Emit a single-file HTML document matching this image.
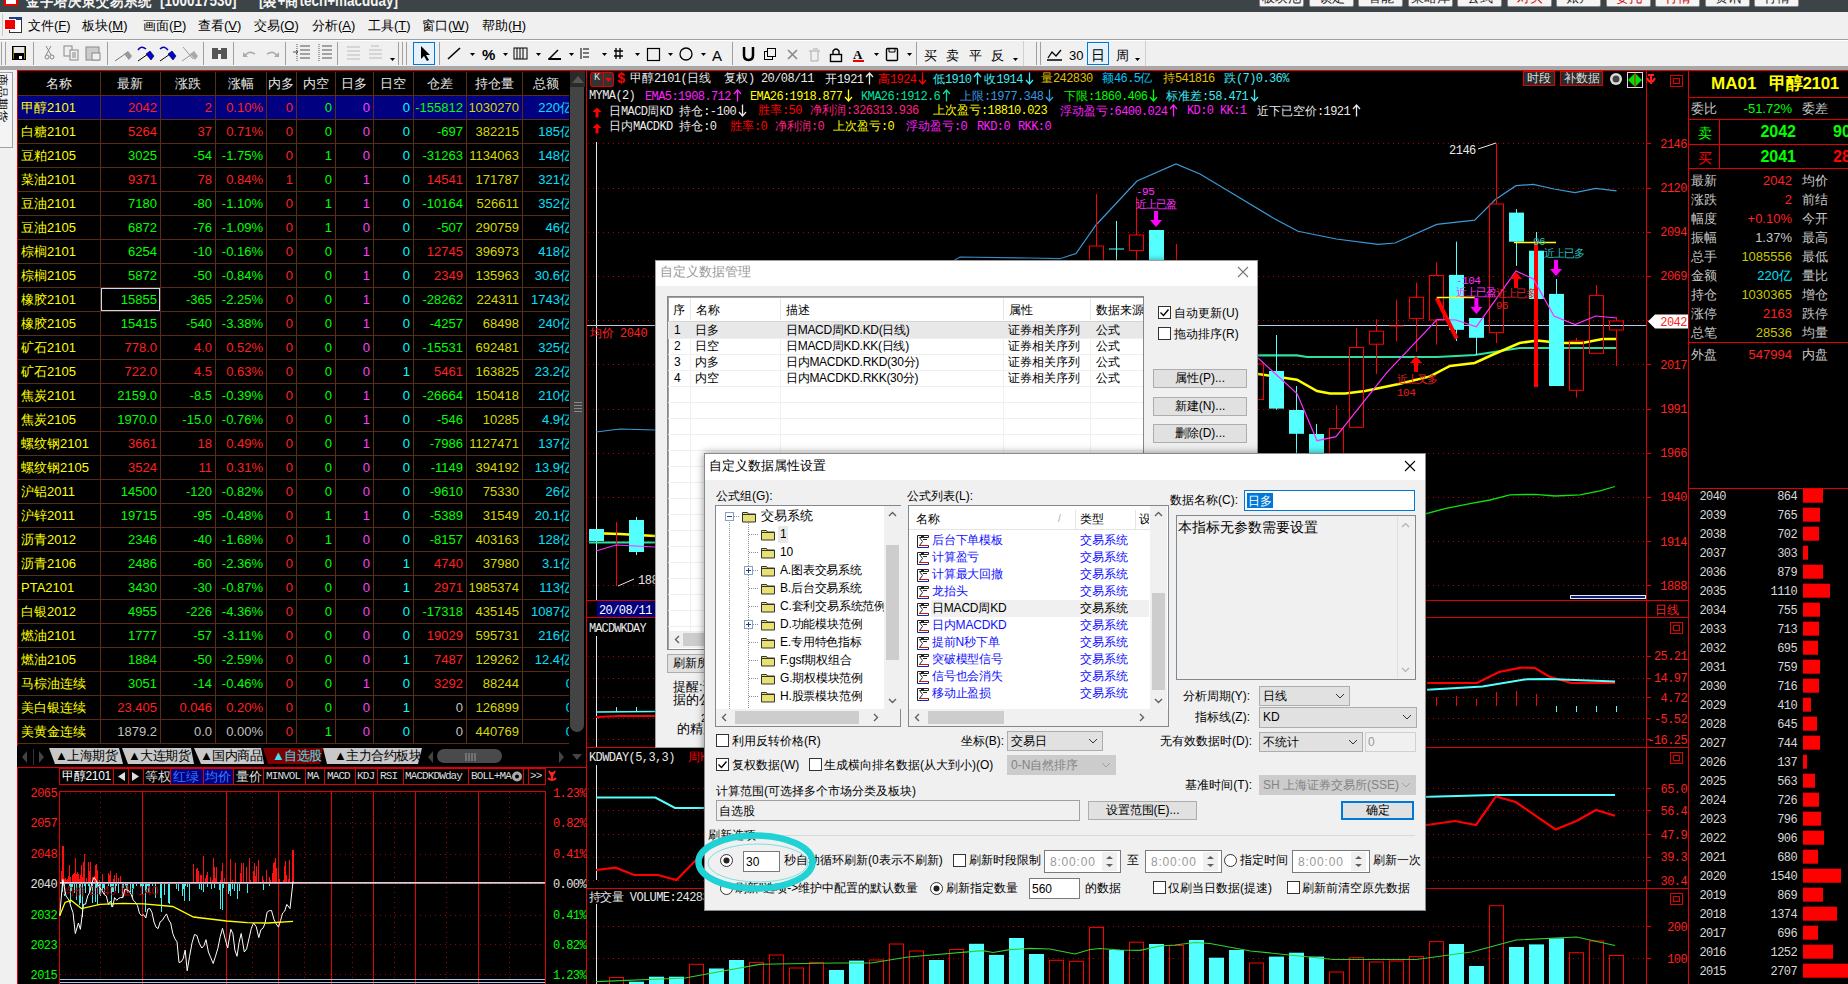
<!DOCTYPE html><html><head><meta charset="utf-8"><style>
*{margin:0;padding:0;box-sizing:border-box}
html,body{width:1848px;height:984px;overflow:hidden;background:#000;font-family:"Liberation Sans",sans-serif;font-size:13px}
.a{position:absolute}
.m{font-family:"Liberation Mono",monospace}
.nw{white-space:nowrap}
</style></head><body>
<div class="a" style="left:15px;top:68px;width:574px;height:700px;background:#000"></div>
<div class="a" style="left:17px;top:70px;width:570px;height:676px;border:1px solid #d00000;border-bottom:none;border-right:none"></div>
<div class="a" style="left:15px;top:68px;width:2px;height:700px;background:#9a9a9a"></div>
<div class="a" style="left:15px;top:68px;width:572px;height:2px;background:#9a9a9a"></div>
<div class="a" style="left:18px;top:71px;width:551px;height:675px;overflow:hidden">
<div class="a" style="left:0;top:25px;width:551px;height:23px;background:#000080"></div>
<div class="a" style="left:82px;top:1px;width:1px;height:672px;background:#5a2e14"></div>
<div class="a" style="left:142px;top:1px;width:1px;height:672px;background:#5a2e14"></div>
<div class="a" style="left:197px;top:1px;width:1px;height:672px;background:#5a2e14"></div>
<div class="a" style="left:248px;top:1px;width:1px;height:672px;background:#5a2e14"></div>
<div class="a" style="left:278px;top:1px;width:1px;height:672px;background:#5a2e14"></div>
<div class="a" style="left:317px;top:1px;width:1px;height:672px;background:#5a2e14"></div>
<div class="a" style="left:355px;top:1px;width:1px;height:672px;background:#5a2e14"></div>
<div class="a" style="left:395px;top:1px;width:1px;height:672px;background:#5a2e14"></div>
<div class="a" style="left:448px;top:1px;width:1px;height:672px;background:#5a2e14"></div>
<div class="a" style="left:504px;top:1px;width:1px;height:672px;background:#5a2e14"></div>
<div class="a" style="left:0;top:24px;width:551px;height:1px;background:#5a2e14"></div>
<div class="a" style="left:0;top:48px;width:551px;height:1px;background:#5a2e14"></div>
<div class="a" style="left:0;top:72px;width:551px;height:1px;background:#5a2e14"></div>
<div class="a" style="left:0;top:96px;width:551px;height:1px;background:#5a2e14"></div>
<div class="a" style="left:0;top:120px;width:551px;height:1px;background:#5a2e14"></div>
<div class="a" style="left:0;top:144px;width:551px;height:1px;background:#5a2e14"></div>
<div class="a" style="left:0;top:168px;width:551px;height:1px;background:#5a2e14"></div>
<div class="a" style="left:0;top:192px;width:551px;height:1px;background:#5a2e14"></div>
<div class="a" style="left:0;top:216px;width:551px;height:1px;background:#5a2e14"></div>
<div class="a" style="left:0;top:240px;width:551px;height:1px;background:#5a2e14"></div>
<div class="a" style="left:0;top:264px;width:551px;height:1px;background:#5a2e14"></div>
<div class="a" style="left:0;top:288px;width:551px;height:1px;background:#5a2e14"></div>
<div class="a" style="left:0;top:312px;width:551px;height:1px;background:#5a2e14"></div>
<div class="a" style="left:0;top:336px;width:551px;height:1px;background:#5a2e14"></div>
<div class="a" style="left:0;top:360px;width:551px;height:1px;background:#5a2e14"></div>
<div class="a" style="left:0;top:384px;width:551px;height:1px;background:#5a2e14"></div>
<div class="a" style="left:0;top:408px;width:551px;height:1px;background:#5a2e14"></div>
<div class="a" style="left:0;top:432px;width:551px;height:1px;background:#5a2e14"></div>
<div class="a" style="left:0;top:456px;width:551px;height:1px;background:#5a2e14"></div>
<div class="a" style="left:0;top:480px;width:551px;height:1px;background:#5a2e14"></div>
<div class="a" style="left:0;top:504px;width:551px;height:1px;background:#5a2e14"></div>
<div class="a" style="left:0;top:528px;width:551px;height:1px;background:#5a2e14"></div>
<div class="a" style="left:0;top:552px;width:551px;height:1px;background:#5a2e14"></div>
<div class="a" style="left:0;top:576px;width:551px;height:1px;background:#5a2e14"></div>
<div class="a" style="left:0;top:600px;width:551px;height:1px;background:#5a2e14"></div>
<div class="a" style="left:0;top:624px;width:551px;height:1px;background:#5a2e14"></div>
<div class="a" style="left:0;top:648px;width:551px;height:1px;background:#5a2e14"></div>
<div class="a" style="left:0;top:672px;width:551px;height:1px;background:#5a2e14"></div>
<div class="a nw" style="left:0px;top:5px;width:82px;text-align:center;color:#e8e8e8;line-height:16px">名称</div>
<div class="a nw" style="left:82px;top:5px;width:60px;text-align:center;color:#e8e8e8;line-height:16px">最新</div>
<div class="a nw" style="left:142px;top:5px;width:55px;text-align:center;color:#e8e8e8;line-height:16px">涨跌</div>
<div class="a nw" style="left:197px;top:5px;width:51px;text-align:center;color:#e8e8e8;line-height:16px">涨幅</div>
<div class="a nw" style="left:248px;top:5px;width:30px;text-align:center;color:#e8e8e8;line-height:16px">内多</div>
<div class="a nw" style="left:278px;top:5px;width:39px;text-align:center;color:#e8e8e8;line-height:16px">内空</div>
<div class="a nw" style="left:317px;top:5px;width:38px;text-align:center;color:#e8e8e8;line-height:16px">日多</div>
<div class="a nw" style="left:355px;top:5px;width:40px;text-align:center;color:#e8e8e8;line-height:16px">日空</div>
<div class="a nw" style="left:395px;top:5px;width:53px;text-align:center;color:#e8e8e8;line-height:16px">仓差</div>
<div class="a nw" style="left:448px;top:5px;width:56px;text-align:center;color:#e8e8e8;line-height:16px">持仓量</div>
<div class="a nw" style="left:504px;top:5px;width:47px;text-align:center;color:#e8e8e8;line-height:16px">总额</div>
<div class="a nw" style="left:3px;top:29px;color:#ffff00;line-height:16px">甲醇2101</div>
<div class="a nw" style="left:82px;top:29px;width:57px;text-align:right;color:#ff2020;line-height:16px">2042</div>
<div class="a nw" style="left:142px;top:29px;width:52px;text-align:right;color:#ff2020;line-height:16px">2</div>
<div class="a nw" style="left:197px;top:29px;width:48px;text-align:right;color:#ff2020;line-height:16px">0.10%</div>
<div class="a nw" style="left:248px;top:29px;width:27px;text-align:right;color:#ff2020;line-height:16px">0</div>
<div class="a nw" style="left:278px;top:29px;width:36px;text-align:right;color:#00ff00;line-height:16px">0</div>
<div class="a nw" style="left:317px;top:29px;width:35px;text-align:right;color:#ff40ff;line-height:16px">0</div>
<div class="a nw" style="left:355px;top:29px;width:37px;text-align:right;color:#00ffff;line-height:16px">0</div>
<div class="a nw" style="left:395px;top:29px;width:50px;text-align:right;color:#00ff00;line-height:16px">-155812</div>
<div class="a nw" style="left:448px;top:29px;width:53px;text-align:right;color:#d8d800;line-height:16px">1030270</div>
<div class="a nw" style="left:504px;top:29px;width:51px;text-align:right;color:#00e0ff;line-height:16px">220亿</div>
<div class="a nw" style="left:3px;top:53px;color:#ffff00;line-height:16px">白糖2101</div>
<div class="a nw" style="left:82px;top:53px;width:57px;text-align:right;color:#ff2020;line-height:16px">5264</div>
<div class="a nw" style="left:142px;top:53px;width:52px;text-align:right;color:#ff2020;line-height:16px">37</div>
<div class="a nw" style="left:197px;top:53px;width:48px;text-align:right;color:#ff2020;line-height:16px">0.71%</div>
<div class="a nw" style="left:248px;top:53px;width:27px;text-align:right;color:#ff2020;line-height:16px">0</div>
<div class="a nw" style="left:278px;top:53px;width:36px;text-align:right;color:#00ff00;line-height:16px">0</div>
<div class="a nw" style="left:317px;top:53px;width:35px;text-align:right;color:#ff40ff;line-height:16px">0</div>
<div class="a nw" style="left:355px;top:53px;width:37px;text-align:right;color:#00ffff;line-height:16px">0</div>
<div class="a nw" style="left:395px;top:53px;width:50px;text-align:right;color:#00ff00;line-height:16px">-697</div>
<div class="a nw" style="left:448px;top:53px;width:53px;text-align:right;color:#d8d800;line-height:16px">382215</div>
<div class="a nw" style="left:504px;top:53px;width:51px;text-align:right;color:#00e0ff;line-height:16px">185亿</div>
<div class="a nw" style="left:3px;top:77px;color:#ffff00;line-height:16px">豆粕2105</div>
<div class="a nw" style="left:82px;top:77px;width:57px;text-align:right;color:#00ff00;line-height:16px">3025</div>
<div class="a nw" style="left:142px;top:77px;width:52px;text-align:right;color:#00ff00;line-height:16px">-54</div>
<div class="a nw" style="left:197px;top:77px;width:48px;text-align:right;color:#00ff00;line-height:16px">-1.75%</div>
<div class="a nw" style="left:248px;top:77px;width:27px;text-align:right;color:#ff2020;line-height:16px">0</div>
<div class="a nw" style="left:278px;top:77px;width:36px;text-align:right;color:#00ff00;line-height:16px">1</div>
<div class="a nw" style="left:317px;top:77px;width:35px;text-align:right;color:#ff40ff;line-height:16px">0</div>
<div class="a nw" style="left:355px;top:77px;width:37px;text-align:right;color:#00ffff;line-height:16px">0</div>
<div class="a nw" style="left:395px;top:77px;width:50px;text-align:right;color:#00ff00;line-height:16px">-31263</div>
<div class="a nw" style="left:448px;top:77px;width:53px;text-align:right;color:#d8d800;line-height:16px">1134063</div>
<div class="a nw" style="left:504px;top:77px;width:51px;text-align:right;color:#00e0ff;line-height:16px">148亿</div>
<div class="a nw" style="left:3px;top:101px;color:#ffff00;line-height:16px">菜油2101</div>
<div class="a nw" style="left:82px;top:101px;width:57px;text-align:right;color:#ff2020;line-height:16px">9371</div>
<div class="a nw" style="left:142px;top:101px;width:52px;text-align:right;color:#ff2020;line-height:16px">78</div>
<div class="a nw" style="left:197px;top:101px;width:48px;text-align:right;color:#ff2020;line-height:16px">0.84%</div>
<div class="a nw" style="left:248px;top:101px;width:27px;text-align:right;color:#ff2020;line-height:16px">1</div>
<div class="a nw" style="left:278px;top:101px;width:36px;text-align:right;color:#00ff00;line-height:16px">0</div>
<div class="a nw" style="left:317px;top:101px;width:35px;text-align:right;color:#ff40ff;line-height:16px">1</div>
<div class="a nw" style="left:355px;top:101px;width:37px;text-align:right;color:#00ffff;line-height:16px">0</div>
<div class="a nw" style="left:395px;top:101px;width:50px;text-align:right;color:#ff2020;line-height:16px">14541</div>
<div class="a nw" style="left:448px;top:101px;width:53px;text-align:right;color:#d8d800;line-height:16px">171787</div>
<div class="a nw" style="left:504px;top:101px;width:51px;text-align:right;color:#00e0ff;line-height:16px">321亿</div>
<div class="a nw" style="left:3px;top:125px;color:#ffff00;line-height:16px">豆油2101</div>
<div class="a nw" style="left:82px;top:125px;width:57px;text-align:right;color:#00ff00;line-height:16px">7180</div>
<div class="a nw" style="left:142px;top:125px;width:52px;text-align:right;color:#00ff00;line-height:16px">-80</div>
<div class="a nw" style="left:197px;top:125px;width:48px;text-align:right;color:#00ff00;line-height:16px">-1.10%</div>
<div class="a nw" style="left:248px;top:125px;width:27px;text-align:right;color:#ff2020;line-height:16px">0</div>
<div class="a nw" style="left:278px;top:125px;width:36px;text-align:right;color:#00ff00;line-height:16px">1</div>
<div class="a nw" style="left:317px;top:125px;width:35px;text-align:right;color:#ff40ff;line-height:16px">1</div>
<div class="a nw" style="left:355px;top:125px;width:37px;text-align:right;color:#00ffff;line-height:16px">0</div>
<div class="a nw" style="left:395px;top:125px;width:50px;text-align:right;color:#00ff00;line-height:16px">-10164</div>
<div class="a nw" style="left:448px;top:125px;width:53px;text-align:right;color:#d8d800;line-height:16px">526611</div>
<div class="a nw" style="left:504px;top:125px;width:51px;text-align:right;color:#00e0ff;line-height:16px">352亿</div>
<div class="a nw" style="left:3px;top:149px;color:#ffff00;line-height:16px">豆油2105</div>
<div class="a nw" style="left:82px;top:149px;width:57px;text-align:right;color:#00ff00;line-height:16px">6872</div>
<div class="a nw" style="left:142px;top:149px;width:52px;text-align:right;color:#00ff00;line-height:16px">-76</div>
<div class="a nw" style="left:197px;top:149px;width:48px;text-align:right;color:#00ff00;line-height:16px">-1.09%</div>
<div class="a nw" style="left:248px;top:149px;width:27px;text-align:right;color:#ff2020;line-height:16px">0</div>
<div class="a nw" style="left:278px;top:149px;width:36px;text-align:right;color:#00ff00;line-height:16px">1</div>
<div class="a nw" style="left:317px;top:149px;width:35px;text-align:right;color:#ff40ff;line-height:16px">0</div>
<div class="a nw" style="left:355px;top:149px;width:37px;text-align:right;color:#00ffff;line-height:16px">0</div>
<div class="a nw" style="left:395px;top:149px;width:50px;text-align:right;color:#00ff00;line-height:16px">-507</div>
<div class="a nw" style="left:448px;top:149px;width:53px;text-align:right;color:#d8d800;line-height:16px">290759</div>
<div class="a nw" style="left:504px;top:149px;width:51px;text-align:right;color:#00e0ff;line-height:16px">46亿</div>
<div class="a nw" style="left:3px;top:173px;color:#ffff00;line-height:16px">棕榈2101</div>
<div class="a nw" style="left:82px;top:173px;width:57px;text-align:right;color:#00ff00;line-height:16px">6254</div>
<div class="a nw" style="left:142px;top:173px;width:52px;text-align:right;color:#00ff00;line-height:16px">-10</div>
<div class="a nw" style="left:197px;top:173px;width:48px;text-align:right;color:#00ff00;line-height:16px">-0.16%</div>
<div class="a nw" style="left:248px;top:173px;width:27px;text-align:right;color:#ff2020;line-height:16px">0</div>
<div class="a nw" style="left:278px;top:173px;width:36px;text-align:right;color:#00ff00;line-height:16px">0</div>
<div class="a nw" style="left:317px;top:173px;width:35px;text-align:right;color:#ff40ff;line-height:16px">1</div>
<div class="a nw" style="left:355px;top:173px;width:37px;text-align:right;color:#00ffff;line-height:16px">0</div>
<div class="a nw" style="left:395px;top:173px;width:50px;text-align:right;color:#ff2020;line-height:16px">12745</div>
<div class="a nw" style="left:448px;top:173px;width:53px;text-align:right;color:#d8d800;line-height:16px">396973</div>
<div class="a nw" style="left:504px;top:173px;width:51px;text-align:right;color:#00e0ff;line-height:16px">418亿</div>
<div class="a nw" style="left:3px;top:197px;color:#ffff00;line-height:16px">棕榈2105</div>
<div class="a nw" style="left:82px;top:197px;width:57px;text-align:right;color:#00ff00;line-height:16px">5872</div>
<div class="a nw" style="left:142px;top:197px;width:52px;text-align:right;color:#00ff00;line-height:16px">-50</div>
<div class="a nw" style="left:197px;top:197px;width:48px;text-align:right;color:#00ff00;line-height:16px">-0.84%</div>
<div class="a nw" style="left:248px;top:197px;width:27px;text-align:right;color:#ff2020;line-height:16px">0</div>
<div class="a nw" style="left:278px;top:197px;width:36px;text-align:right;color:#00ff00;line-height:16px">0</div>
<div class="a nw" style="left:317px;top:197px;width:35px;text-align:right;color:#ff40ff;line-height:16px">1</div>
<div class="a nw" style="left:355px;top:197px;width:37px;text-align:right;color:#00ffff;line-height:16px">0</div>
<div class="a nw" style="left:395px;top:197px;width:50px;text-align:right;color:#ff2020;line-height:16px">2349</div>
<div class="a nw" style="left:448px;top:197px;width:53px;text-align:right;color:#d8d800;line-height:16px">135963</div>
<div class="a nw" style="left:504px;top:197px;width:51px;text-align:right;color:#00e0ff;line-height:16px">30.6亿</div>
<div class="a nw" style="left:3px;top:221px;color:#ffff00;line-height:16px">橡胶2101</div>
<div class="a nw" style="left:82px;top:221px;width:57px;text-align:right;color:#00ff00;line-height:16px">15855</div>
<div class="a nw" style="left:142px;top:221px;width:52px;text-align:right;color:#00ff00;line-height:16px">-365</div>
<div class="a nw" style="left:197px;top:221px;width:48px;text-align:right;color:#00ff00;line-height:16px">-2.25%</div>
<div class="a nw" style="left:248px;top:221px;width:27px;text-align:right;color:#ff2020;line-height:16px">0</div>
<div class="a nw" style="left:278px;top:221px;width:36px;text-align:right;color:#00ff00;line-height:16px">0</div>
<div class="a nw" style="left:317px;top:221px;width:35px;text-align:right;color:#ff40ff;line-height:16px">1</div>
<div class="a nw" style="left:355px;top:221px;width:37px;text-align:right;color:#00ffff;line-height:16px">0</div>
<div class="a nw" style="left:395px;top:221px;width:50px;text-align:right;color:#00ff00;line-height:16px">-28262</div>
<div class="a nw" style="left:448px;top:221px;width:53px;text-align:right;color:#d8d800;line-height:16px">224311</div>
<div class="a nw" style="left:504px;top:221px;width:51px;text-align:right;color:#00e0ff;line-height:16px">1743亿</div>
<div class="a nw" style="left:3px;top:245px;color:#ffff00;line-height:16px">橡胶2105</div>
<div class="a nw" style="left:82px;top:245px;width:57px;text-align:right;color:#00ff00;line-height:16px">15415</div>
<div class="a nw" style="left:142px;top:245px;width:52px;text-align:right;color:#00ff00;line-height:16px">-540</div>
<div class="a nw" style="left:197px;top:245px;width:48px;text-align:right;color:#00ff00;line-height:16px">-3.38%</div>
<div class="a nw" style="left:248px;top:245px;width:27px;text-align:right;color:#ff2020;line-height:16px">0</div>
<div class="a nw" style="left:278px;top:245px;width:36px;text-align:right;color:#00ff00;line-height:16px">0</div>
<div class="a nw" style="left:317px;top:245px;width:35px;text-align:right;color:#ff40ff;line-height:16px">1</div>
<div class="a nw" style="left:355px;top:245px;width:37px;text-align:right;color:#00ffff;line-height:16px">0</div>
<div class="a nw" style="left:395px;top:245px;width:50px;text-align:right;color:#00ff00;line-height:16px">-4257</div>
<div class="a nw" style="left:448px;top:245px;width:53px;text-align:right;color:#d8d800;line-height:16px">68498</div>
<div class="a nw" style="left:504px;top:245px;width:51px;text-align:right;color:#00e0ff;line-height:16px">240亿</div>
<div class="a nw" style="left:3px;top:269px;color:#ffff00;line-height:16px">矿石2101</div>
<div class="a nw" style="left:82px;top:269px;width:57px;text-align:right;color:#ff2020;line-height:16px">778.0</div>
<div class="a nw" style="left:142px;top:269px;width:52px;text-align:right;color:#ff2020;line-height:16px">4.0</div>
<div class="a nw" style="left:197px;top:269px;width:48px;text-align:right;color:#ff2020;line-height:16px">0.52%</div>
<div class="a nw" style="left:248px;top:269px;width:27px;text-align:right;color:#ff2020;line-height:16px">0</div>
<div class="a nw" style="left:278px;top:269px;width:36px;text-align:right;color:#00ff00;line-height:16px">0</div>
<div class="a nw" style="left:317px;top:269px;width:35px;text-align:right;color:#ff40ff;line-height:16px">0</div>
<div class="a nw" style="left:355px;top:269px;width:37px;text-align:right;color:#00ffff;line-height:16px">0</div>
<div class="a nw" style="left:395px;top:269px;width:50px;text-align:right;color:#00ff00;line-height:16px">-15531</div>
<div class="a nw" style="left:448px;top:269px;width:53px;text-align:right;color:#d8d800;line-height:16px">692481</div>
<div class="a nw" style="left:504px;top:269px;width:51px;text-align:right;color:#00e0ff;line-height:16px">325亿</div>
<div class="a nw" style="left:3px;top:293px;color:#ffff00;line-height:16px">矿石2105</div>
<div class="a nw" style="left:82px;top:293px;width:57px;text-align:right;color:#ff2020;line-height:16px">722.0</div>
<div class="a nw" style="left:142px;top:293px;width:52px;text-align:right;color:#ff2020;line-height:16px">4.5</div>
<div class="a nw" style="left:197px;top:293px;width:48px;text-align:right;color:#ff2020;line-height:16px">0.63%</div>
<div class="a nw" style="left:248px;top:293px;width:27px;text-align:right;color:#ff2020;line-height:16px">0</div>
<div class="a nw" style="left:278px;top:293px;width:36px;text-align:right;color:#00ff00;line-height:16px">0</div>
<div class="a nw" style="left:317px;top:293px;width:35px;text-align:right;color:#ff40ff;line-height:16px">0</div>
<div class="a nw" style="left:355px;top:293px;width:37px;text-align:right;color:#00ffff;line-height:16px">1</div>
<div class="a nw" style="left:395px;top:293px;width:50px;text-align:right;color:#ff2020;line-height:16px">5461</div>
<div class="a nw" style="left:448px;top:293px;width:53px;text-align:right;color:#d8d800;line-height:16px">163825</div>
<div class="a nw" style="left:504px;top:293px;width:51px;text-align:right;color:#00e0ff;line-height:16px">23.2亿</div>
<div class="a nw" style="left:3px;top:317px;color:#ffff00;line-height:16px">焦炭2101</div>
<div class="a nw" style="left:82px;top:317px;width:57px;text-align:right;color:#00ff00;line-height:16px">2159.0</div>
<div class="a nw" style="left:142px;top:317px;width:52px;text-align:right;color:#00ff00;line-height:16px">-8.5</div>
<div class="a nw" style="left:197px;top:317px;width:48px;text-align:right;color:#00ff00;line-height:16px">-0.39%</div>
<div class="a nw" style="left:248px;top:317px;width:27px;text-align:right;color:#ff2020;line-height:16px">0</div>
<div class="a nw" style="left:278px;top:317px;width:36px;text-align:right;color:#00ff00;line-height:16px">0</div>
<div class="a nw" style="left:317px;top:317px;width:35px;text-align:right;color:#ff40ff;line-height:16px">1</div>
<div class="a nw" style="left:355px;top:317px;width:37px;text-align:right;color:#00ffff;line-height:16px">0</div>
<div class="a nw" style="left:395px;top:317px;width:50px;text-align:right;color:#00ff00;line-height:16px">-26664</div>
<div class="a nw" style="left:448px;top:317px;width:53px;text-align:right;color:#d8d800;line-height:16px">150418</div>
<div class="a nw" style="left:504px;top:317px;width:51px;text-align:right;color:#00e0ff;line-height:16px">210亿</div>
<div class="a nw" style="left:3px;top:341px;color:#ffff00;line-height:16px">焦炭2105</div>
<div class="a nw" style="left:82px;top:341px;width:57px;text-align:right;color:#00ff00;line-height:16px">1970.0</div>
<div class="a nw" style="left:142px;top:341px;width:52px;text-align:right;color:#00ff00;line-height:16px">-15.0</div>
<div class="a nw" style="left:197px;top:341px;width:48px;text-align:right;color:#00ff00;line-height:16px">-0.76%</div>
<div class="a nw" style="left:248px;top:341px;width:27px;text-align:right;color:#ff2020;line-height:16px">0</div>
<div class="a nw" style="left:278px;top:341px;width:36px;text-align:right;color:#00ff00;line-height:16px">0</div>
<div class="a nw" style="left:317px;top:341px;width:35px;text-align:right;color:#ff40ff;line-height:16px">1</div>
<div class="a nw" style="left:355px;top:341px;width:37px;text-align:right;color:#00ffff;line-height:16px">0</div>
<div class="a nw" style="left:395px;top:341px;width:50px;text-align:right;color:#00ff00;line-height:16px">-546</div>
<div class="a nw" style="left:448px;top:341px;width:53px;text-align:right;color:#d8d800;line-height:16px">10285</div>
<div class="a nw" style="left:504px;top:341px;width:51px;text-align:right;color:#00e0ff;line-height:16px">4.9亿</div>
<div class="a nw" style="left:3px;top:365px;color:#ffff00;line-height:16px">螺纹钢2101</div>
<div class="a nw" style="left:82px;top:365px;width:57px;text-align:right;color:#ff2020;line-height:16px">3661</div>
<div class="a nw" style="left:142px;top:365px;width:52px;text-align:right;color:#ff2020;line-height:16px">18</div>
<div class="a nw" style="left:197px;top:365px;width:48px;text-align:right;color:#ff2020;line-height:16px">0.49%</div>
<div class="a nw" style="left:248px;top:365px;width:27px;text-align:right;color:#ff2020;line-height:16px">0</div>
<div class="a nw" style="left:278px;top:365px;width:36px;text-align:right;color:#00ff00;line-height:16px">0</div>
<div class="a nw" style="left:317px;top:365px;width:35px;text-align:right;color:#ff40ff;line-height:16px">1</div>
<div class="a nw" style="left:355px;top:365px;width:37px;text-align:right;color:#00ffff;line-height:16px">0</div>
<div class="a nw" style="left:395px;top:365px;width:50px;text-align:right;color:#00ff00;line-height:16px">-7986</div>
<div class="a nw" style="left:448px;top:365px;width:53px;text-align:right;color:#d8d800;line-height:16px">1127471</div>
<div class="a nw" style="left:504px;top:365px;width:51px;text-align:right;color:#00e0ff;line-height:16px">137亿</div>
<div class="a nw" style="left:3px;top:389px;color:#ffff00;line-height:16px">螺纹钢2105</div>
<div class="a nw" style="left:82px;top:389px;width:57px;text-align:right;color:#ff2020;line-height:16px">3524</div>
<div class="a nw" style="left:142px;top:389px;width:52px;text-align:right;color:#ff2020;line-height:16px">11</div>
<div class="a nw" style="left:197px;top:389px;width:48px;text-align:right;color:#ff2020;line-height:16px">0.31%</div>
<div class="a nw" style="left:248px;top:389px;width:27px;text-align:right;color:#ff2020;line-height:16px">0</div>
<div class="a nw" style="left:278px;top:389px;width:36px;text-align:right;color:#00ff00;line-height:16px">0</div>
<div class="a nw" style="left:317px;top:389px;width:35px;text-align:right;color:#ff40ff;line-height:16px">0</div>
<div class="a nw" style="left:355px;top:389px;width:37px;text-align:right;color:#00ffff;line-height:16px">0</div>
<div class="a nw" style="left:395px;top:389px;width:50px;text-align:right;color:#00ff00;line-height:16px">-1149</div>
<div class="a nw" style="left:448px;top:389px;width:53px;text-align:right;color:#d8d800;line-height:16px">394192</div>
<div class="a nw" style="left:504px;top:389px;width:51px;text-align:right;color:#00e0ff;line-height:16px">13.9亿</div>
<div class="a nw" style="left:3px;top:413px;color:#ffff00;line-height:16px">沪铝2011</div>
<div class="a nw" style="left:82px;top:413px;width:57px;text-align:right;color:#00ff00;line-height:16px">14500</div>
<div class="a nw" style="left:142px;top:413px;width:52px;text-align:right;color:#00ff00;line-height:16px">-120</div>
<div class="a nw" style="left:197px;top:413px;width:48px;text-align:right;color:#00ff00;line-height:16px">-0.82%</div>
<div class="a nw" style="left:248px;top:413px;width:27px;text-align:right;color:#ff2020;line-height:16px">0</div>
<div class="a nw" style="left:278px;top:413px;width:36px;text-align:right;color:#00ff00;line-height:16px">0</div>
<div class="a nw" style="left:317px;top:413px;width:35px;text-align:right;color:#ff40ff;line-height:16px">0</div>
<div class="a nw" style="left:355px;top:413px;width:37px;text-align:right;color:#00ffff;line-height:16px">0</div>
<div class="a nw" style="left:395px;top:413px;width:50px;text-align:right;color:#00ff00;line-height:16px">-9610</div>
<div class="a nw" style="left:448px;top:413px;width:53px;text-align:right;color:#d8d800;line-height:16px">75330</div>
<div class="a nw" style="left:504px;top:413px;width:51px;text-align:right;color:#00e0ff;line-height:16px">26亿</div>
<div class="a nw" style="left:3px;top:437px;color:#ffff00;line-height:16px">沪锌2011</div>
<div class="a nw" style="left:82px;top:437px;width:57px;text-align:right;color:#00ff00;line-height:16px">19715</div>
<div class="a nw" style="left:142px;top:437px;width:52px;text-align:right;color:#00ff00;line-height:16px">-95</div>
<div class="a nw" style="left:197px;top:437px;width:48px;text-align:right;color:#00ff00;line-height:16px">-0.48%</div>
<div class="a nw" style="left:248px;top:437px;width:27px;text-align:right;color:#ff2020;line-height:16px">0</div>
<div class="a nw" style="left:278px;top:437px;width:36px;text-align:right;color:#00ff00;line-height:16px">1</div>
<div class="a nw" style="left:317px;top:437px;width:35px;text-align:right;color:#ff40ff;line-height:16px">1</div>
<div class="a nw" style="left:355px;top:437px;width:37px;text-align:right;color:#00ffff;line-height:16px">0</div>
<div class="a nw" style="left:395px;top:437px;width:50px;text-align:right;color:#00ff00;line-height:16px">-5389</div>
<div class="a nw" style="left:448px;top:437px;width:53px;text-align:right;color:#d8d800;line-height:16px">31549</div>
<div class="a nw" style="left:504px;top:437px;width:51px;text-align:right;color:#00e0ff;line-height:16px">20.1亿</div>
<div class="a nw" style="left:3px;top:461px;color:#ffff00;line-height:16px">沥青2012</div>
<div class="a nw" style="left:82px;top:461px;width:57px;text-align:right;color:#00ff00;line-height:16px">2346</div>
<div class="a nw" style="left:142px;top:461px;width:52px;text-align:right;color:#00ff00;line-height:16px">-40</div>
<div class="a nw" style="left:197px;top:461px;width:48px;text-align:right;color:#00ff00;line-height:16px">-1.68%</div>
<div class="a nw" style="left:248px;top:461px;width:27px;text-align:right;color:#ff2020;line-height:16px">0</div>
<div class="a nw" style="left:278px;top:461px;width:36px;text-align:right;color:#00ff00;line-height:16px">1</div>
<div class="a nw" style="left:317px;top:461px;width:35px;text-align:right;color:#ff40ff;line-height:16px">0</div>
<div class="a nw" style="left:355px;top:461px;width:37px;text-align:right;color:#00ffff;line-height:16px">0</div>
<div class="a nw" style="left:395px;top:461px;width:50px;text-align:right;color:#00ff00;line-height:16px">-8157</div>
<div class="a nw" style="left:448px;top:461px;width:53px;text-align:right;color:#d8d800;line-height:16px">403163</div>
<div class="a nw" style="left:504px;top:461px;width:51px;text-align:right;color:#00e0ff;line-height:16px">128亿</div>
<div class="a nw" style="left:3px;top:485px;color:#ffff00;line-height:16px">沥青2106</div>
<div class="a nw" style="left:82px;top:485px;width:57px;text-align:right;color:#00ff00;line-height:16px">2486</div>
<div class="a nw" style="left:142px;top:485px;width:52px;text-align:right;color:#00ff00;line-height:16px">-60</div>
<div class="a nw" style="left:197px;top:485px;width:48px;text-align:right;color:#00ff00;line-height:16px">-2.36%</div>
<div class="a nw" style="left:248px;top:485px;width:27px;text-align:right;color:#ff2020;line-height:16px">0</div>
<div class="a nw" style="left:278px;top:485px;width:36px;text-align:right;color:#00ff00;line-height:16px">0</div>
<div class="a nw" style="left:317px;top:485px;width:35px;text-align:right;color:#ff40ff;line-height:16px">0</div>
<div class="a nw" style="left:355px;top:485px;width:37px;text-align:right;color:#00ffff;line-height:16px">1</div>
<div class="a nw" style="left:395px;top:485px;width:50px;text-align:right;color:#ff2020;line-height:16px">4740</div>
<div class="a nw" style="left:448px;top:485px;width:53px;text-align:right;color:#d8d800;line-height:16px">37980</div>
<div class="a nw" style="left:504px;top:485px;width:51px;text-align:right;color:#00e0ff;line-height:16px">3.1亿</div>
<div class="a nw" style="left:3px;top:509px;color:#ffff00;line-height:16px">PTA2101</div>
<div class="a nw" style="left:82px;top:509px;width:57px;text-align:right;color:#00ff00;line-height:16px">3430</div>
<div class="a nw" style="left:142px;top:509px;width:52px;text-align:right;color:#00ff00;line-height:16px">-30</div>
<div class="a nw" style="left:197px;top:509px;width:48px;text-align:right;color:#00ff00;line-height:16px">-0.87%</div>
<div class="a nw" style="left:248px;top:509px;width:27px;text-align:right;color:#ff2020;line-height:16px">0</div>
<div class="a nw" style="left:278px;top:509px;width:36px;text-align:right;color:#00ff00;line-height:16px">0</div>
<div class="a nw" style="left:317px;top:509px;width:35px;text-align:right;color:#ff40ff;line-height:16px">0</div>
<div class="a nw" style="left:355px;top:509px;width:37px;text-align:right;color:#00ffff;line-height:16px">1</div>
<div class="a nw" style="left:395px;top:509px;width:50px;text-align:right;color:#ff2020;line-height:16px">2971</div>
<div class="a nw" style="left:448px;top:509px;width:53px;text-align:right;color:#d8d800;line-height:16px">1985374</div>
<div class="a nw" style="left:504px;top:509px;width:51px;text-align:right;color:#00e0ff;line-height:16px">113亿</div>
<div class="a nw" style="left:3px;top:533px;color:#ffff00;line-height:16px">白银2012</div>
<div class="a nw" style="left:82px;top:533px;width:57px;text-align:right;color:#00ff00;line-height:16px">4955</div>
<div class="a nw" style="left:142px;top:533px;width:52px;text-align:right;color:#00ff00;line-height:16px">-226</div>
<div class="a nw" style="left:197px;top:533px;width:48px;text-align:right;color:#00ff00;line-height:16px">-4.36%</div>
<div class="a nw" style="left:248px;top:533px;width:27px;text-align:right;color:#ff2020;line-height:16px">0</div>
<div class="a nw" style="left:278px;top:533px;width:36px;text-align:right;color:#00ff00;line-height:16px">0</div>
<div class="a nw" style="left:317px;top:533px;width:35px;text-align:right;color:#ff40ff;line-height:16px">0</div>
<div class="a nw" style="left:355px;top:533px;width:37px;text-align:right;color:#00ffff;line-height:16px">0</div>
<div class="a nw" style="left:395px;top:533px;width:50px;text-align:right;color:#00ff00;line-height:16px">-17318</div>
<div class="a nw" style="left:448px;top:533px;width:53px;text-align:right;color:#d8d800;line-height:16px">435145</div>
<div class="a nw" style="left:504px;top:533px;width:51px;text-align:right;color:#00e0ff;line-height:16px">1087亿</div>
<div class="a nw" style="left:3px;top:557px;color:#ffff00;line-height:16px">燃油2101</div>
<div class="a nw" style="left:82px;top:557px;width:57px;text-align:right;color:#00ff00;line-height:16px">1777</div>
<div class="a nw" style="left:142px;top:557px;width:52px;text-align:right;color:#00ff00;line-height:16px">-57</div>
<div class="a nw" style="left:197px;top:557px;width:48px;text-align:right;color:#00ff00;line-height:16px">-3.11%</div>
<div class="a nw" style="left:248px;top:557px;width:27px;text-align:right;color:#ff2020;line-height:16px">0</div>
<div class="a nw" style="left:278px;top:557px;width:36px;text-align:right;color:#00ff00;line-height:16px">0</div>
<div class="a nw" style="left:317px;top:557px;width:35px;text-align:right;color:#ff40ff;line-height:16px">0</div>
<div class="a nw" style="left:355px;top:557px;width:37px;text-align:right;color:#00ffff;line-height:16px">0</div>
<div class="a nw" style="left:395px;top:557px;width:50px;text-align:right;color:#ff2020;line-height:16px">19029</div>
<div class="a nw" style="left:448px;top:557px;width:53px;text-align:right;color:#d8d800;line-height:16px">595731</div>
<div class="a nw" style="left:504px;top:557px;width:51px;text-align:right;color:#00e0ff;line-height:16px">216亿</div>
<div class="a nw" style="left:3px;top:581px;color:#ffff00;line-height:16px">燃油2105</div>
<div class="a nw" style="left:82px;top:581px;width:57px;text-align:right;color:#00ff00;line-height:16px">1884</div>
<div class="a nw" style="left:142px;top:581px;width:52px;text-align:right;color:#00ff00;line-height:16px">-50</div>
<div class="a nw" style="left:197px;top:581px;width:48px;text-align:right;color:#00ff00;line-height:16px">-2.59%</div>
<div class="a nw" style="left:248px;top:581px;width:27px;text-align:right;color:#ff2020;line-height:16px">0</div>
<div class="a nw" style="left:278px;top:581px;width:36px;text-align:right;color:#00ff00;line-height:16px">0</div>
<div class="a nw" style="left:317px;top:581px;width:35px;text-align:right;color:#ff40ff;line-height:16px">0</div>
<div class="a nw" style="left:355px;top:581px;width:37px;text-align:right;color:#00ffff;line-height:16px">1</div>
<div class="a nw" style="left:395px;top:581px;width:50px;text-align:right;color:#ff2020;line-height:16px">7487</div>
<div class="a nw" style="left:448px;top:581px;width:53px;text-align:right;color:#d8d800;line-height:16px">129262</div>
<div class="a nw" style="left:504px;top:581px;width:51px;text-align:right;color:#00e0ff;line-height:16px">12.4亿</div>
<div class="a nw" style="left:3px;top:605px;color:#ffff00;line-height:16px">马棕油连续</div>
<div class="a nw" style="left:82px;top:605px;width:57px;text-align:right;color:#00ff00;line-height:16px">3051</div>
<div class="a nw" style="left:142px;top:605px;width:52px;text-align:right;color:#00ff00;line-height:16px">-14</div>
<div class="a nw" style="left:197px;top:605px;width:48px;text-align:right;color:#00ff00;line-height:16px">-0.46%</div>
<div class="a nw" style="left:248px;top:605px;width:27px;text-align:right;color:#ff2020;line-height:16px">0</div>
<div class="a nw" style="left:278px;top:605px;width:36px;text-align:right;color:#00ff00;line-height:16px">0</div>
<div class="a nw" style="left:317px;top:605px;width:35px;text-align:right;color:#ff40ff;line-height:16px">1</div>
<div class="a nw" style="left:355px;top:605px;width:37px;text-align:right;color:#00ffff;line-height:16px">0</div>
<div class="a nw" style="left:395px;top:605px;width:50px;text-align:right;color:#ff2020;line-height:16px">3292</div>
<div class="a nw" style="left:448px;top:605px;width:53px;text-align:right;color:#d8d800;line-height:16px">88244</div>
<div class="a nw" style="left:504px;top:605px;width:51px;text-align:right;color:#00e0ff;line-height:16px">0</div>
<div class="a nw" style="left:3px;top:629px;color:#ffff00;line-height:16px">美白银连续</div>
<div class="a nw" style="left:82px;top:629px;width:57px;text-align:right;color:#ff2020;line-height:16px">23.405</div>
<div class="a nw" style="left:142px;top:629px;width:52px;text-align:right;color:#ff2020;line-height:16px">0.046</div>
<div class="a nw" style="left:197px;top:629px;width:48px;text-align:right;color:#ff2020;line-height:16px">0.20%</div>
<div class="a nw" style="left:248px;top:629px;width:27px;text-align:right;color:#ff2020;line-height:16px">0</div>
<div class="a nw" style="left:278px;top:629px;width:36px;text-align:right;color:#00ff00;line-height:16px">0</div>
<div class="a nw" style="left:317px;top:629px;width:35px;text-align:right;color:#ff40ff;line-height:16px">0</div>
<div class="a nw" style="left:355px;top:629px;width:37px;text-align:right;color:#00ffff;line-height:16px">1</div>
<div class="a nw" style="left:395px;top:629px;width:50px;text-align:right;color:#c0c0c0;line-height:16px">0</div>
<div class="a nw" style="left:448px;top:629px;width:53px;text-align:right;color:#d8d800;line-height:16px">126899</div>
<div class="a nw" style="left:504px;top:629px;width:51px;text-align:right;color:#00e0ff;line-height:16px">0</div>
<div class="a nw" style="left:3px;top:653px;color:#ffff00;line-height:16px">美黄金连续</div>
<div class="a nw" style="left:82px;top:653px;width:57px;text-align:right;color:#c0c0c0;line-height:16px">1879.2</div>
<div class="a nw" style="left:142px;top:653px;width:52px;text-align:right;color:#c0c0c0;line-height:16px">0.0</div>
<div class="a nw" style="left:197px;top:653px;width:48px;text-align:right;color:#c0c0c0;line-height:16px">0.00%</div>
<div class="a nw" style="left:248px;top:653px;width:27px;text-align:right;color:#ff2020;line-height:16px">0</div>
<div class="a nw" style="left:278px;top:653px;width:36px;text-align:right;color:#00ff00;line-height:16px">1</div>
<div class="a nw" style="left:317px;top:653px;width:35px;text-align:right;color:#ff40ff;line-height:16px">0</div>
<div class="a nw" style="left:355px;top:653px;width:37px;text-align:right;color:#00ffff;line-height:16px">0</div>
<div class="a nw" style="left:395px;top:653px;width:50px;text-align:right;color:#c0c0c0;line-height:16px">0</div>
<div class="a nw" style="left:448px;top:653px;width:53px;text-align:right;color:#d8d800;line-height:16px">440769</div>
<div class="a nw" style="left:504px;top:653px;width:51px;text-align:right;color:#00e0ff;line-height:16px">0</div>
<div class="a" style="left:83px;top:217px;width:59px;height:23px;border:1px solid #c8d8f0"></div>
</div>
<div class="a" style="left:569px;top:71px;width:17px;height:677px;background:#000"></div>
<div class="a" style="left:570px;top:71px;width:15px;height:16px;background:#2a2a2a"></div>
<div class="a" style="left:569px;top:748px;width:17px;height:18px;border-left:1px solid #333;border-top:1px solid #333"></div>
<div class="a" style="left:570px;top:87px;width:14px;height:645px;background:#444;border-radius:0 0 7px 7px"></div>
<div class="a" style="left:572px;top:76px;width:0;height:0;border-left:6px solid transparent;border-right:6px solid transparent;border-bottom:7px solid #555"></div>
<div class="a" style="left:574px;top:402px;width:8px;height:1px;background:#888;box-shadow:0 3px 0 #888,0 6px 0 #888,0 9px 0 #888"></div>
<div class="a" style="left:586px;top:68px;width:1px;height:916px;background:#d00000"></div>
<div class="a" style="left:17px;top:746px;width:569px;height:21px;background:#000"></div>
<svg class="a" style="left:17px;top:746px" width="569" height="21"><path d="M10 5l-5 6 5 6z" fill="#444"/><path d="M22 5l5 6-5 6z" fill="#444"/><line x1="16.5" y1="3" x2="16.5" y2="19" stroke="#333"/><path d="M32 2h70l4 16h-68z" fill="#c8c8c8"/><path d="M105 2h69l3 16h-66z" fill="#c8c8c8"/><path d="M177 2h67l3 16h-63z" fill="#c8c8c8"/><path d="M246 2h60l-3 16h-52z" fill="#7a0000"/><path d="M306 2h99l-4 16h-91z" fill="#c8c8c8"/><path d="M416 5l-5 6 5 6z" fill="#444"/><rect x="420" y="3" width="65" height="14" rx="7" fill="#4a4a4a"/><path d="M449 7v8M452 7v8M455 7v8M458 7v8" stroke="#999"/><path d="M542 5l5 6-5 6z" fill="#444"/><path d="M555 8h10l-5 6z" fill="#444"/></svg>
<div class="a nw" style="left:55px;top:748px;color:#000;font-size:13px;line-height:16px;letter-spacing:-0.5px">▲上海期货</div>
<div class="a nw" style="left:128px;top:748px;color:#000;font-size:13px;line-height:16px;letter-spacing:-0.5px">▲大连期货</div>
<div class="a nw" style="left:200px;top:748px;color:#000;font-size:13px;line-height:16px;letter-spacing:-0.5px">▲国内商品</div>
<div class="a nw" style="left:272px;top:748px;color:#40e0f0;font-size:13px;line-height:16px;letter-spacing:-0.5px">▲自选股</div>
<div class="a nw" style="left:334px;top:748px;color:#000;font-size:13px;line-height:16px;letter-spacing:-0.5px">▲主力合约板块</div>
<svg class="a" style="left:0;top:0" width="1848" height="984">
<rect x="587" y="71" width="1261" height="913" fill="#000"/><rect x="586" y="66" width="1262" height="4" fill="#a8a8a8"/>
<line x1="586" y1="70.5" x2="1848" y2="70.5" stroke="#e00000"/>
<line x1="586.5" y1="70" x2="586.5" y2="984" stroke="#e00000"/>
<line x1="1646.5" y1="71" x2="1646.5" y2="984" stroke="#e00000"/>
<line x1="1688.5" y1="71" x2="1688.5" y2="984" stroke="#e00000"/>
<line x1="587" y1="600.5" x2="1688" y2="600.5" stroke="#e00000"/>
<line x1="587" y1="617.5" x2="1688" y2="617.5" stroke="#e00000"/>
<line x1="587" y1="747.5" x2="1688" y2="747.5" stroke="#e00000"/>
<line x1="587" y1="888.5" x2="1688" y2="888.5" stroke="#e00000"/>
<line x1="588" y1="143.5" x2="1646" y2="143.5" stroke="#b00000" stroke-dasharray="1 4"/>
<line x1="1647" y1="143.5" x2="1651" y2="143.5" stroke="#e00000"/>
<text x="1687" y="147.8" fill="#ff2020" font-size="12" font-family="Liberation Mono" letter-spacing="-0.5" text-anchor="end" >2146</text>
<line x1="588" y1="188.5" x2="1646" y2="188.5" stroke="#b00000" stroke-dasharray="1 4"/>
<line x1="1647" y1="188.5" x2="1651" y2="188.5" stroke="#e00000"/>
<text x="1687" y="192.0" fill="#ff2020" font-size="12" font-family="Liberation Mono" letter-spacing="-0.5" text-anchor="end" >2120</text>
<line x1="588" y1="232.5" x2="1646" y2="232.5" stroke="#b00000" stroke-dasharray="1 4"/>
<line x1="1647" y1="232.5" x2="1651" y2="232.5" stroke="#e00000"/>
<text x="1687" y="236.20000000000002" fill="#ff2020" font-size="12" font-family="Liberation Mono" letter-spacing="-0.5" text-anchor="end" >2094</text>
<line x1="588" y1="276.5" x2="1646" y2="276.5" stroke="#b00000" stroke-dasharray="1 4"/>
<line x1="1647" y1="276.5" x2="1651" y2="276.5" stroke="#e00000"/>
<text x="1687" y="280.40000000000003" fill="#ff2020" font-size="12" font-family="Liberation Mono" letter-spacing="-0.5" text-anchor="end" >2069</text>
<line x1="588" y1="320.5" x2="1646" y2="320.5" stroke="#b00000" stroke-dasharray="1 4"/>
<line x1="1647" y1="320.5" x2="1651" y2="320.5" stroke="#e00000"/>
<line x1="588" y1="364.5" x2="1646" y2="364.5" stroke="#b00000" stroke-dasharray="1 4"/>
<line x1="1647" y1="364.5" x2="1651" y2="364.5" stroke="#e00000"/>
<text x="1687" y="368.8" fill="#ff2020" font-size="12" font-family="Liberation Mono" letter-spacing="-0.5" text-anchor="end" >2017</text>
<line x1="588" y1="409.5" x2="1646" y2="409.5" stroke="#b00000" stroke-dasharray="1 4"/>
<line x1="1647" y1="409.5" x2="1651" y2="409.5" stroke="#e00000"/>
<text x="1687" y="413.00000000000006" fill="#ff2020" font-size="12" font-family="Liberation Mono" letter-spacing="-0.5" text-anchor="end" >1991</text>
<line x1="588" y1="453.5" x2="1646" y2="453.5" stroke="#b00000" stroke-dasharray="1 4"/>
<line x1="1647" y1="453.5" x2="1651" y2="453.5" stroke="#e00000"/>
<text x="1687" y="457.20000000000005" fill="#ff2020" font-size="12" font-family="Liberation Mono" letter-spacing="-0.5" text-anchor="end" >1966</text>
<line x1="588" y1="497.5" x2="1646" y2="497.5" stroke="#b00000" stroke-dasharray="1 4"/>
<line x1="1647" y1="497.5" x2="1651" y2="497.5" stroke="#e00000"/>
<text x="1687" y="501.40000000000003" fill="#ff2020" font-size="12" font-family="Liberation Mono" letter-spacing="-0.5" text-anchor="end" >1940</text>
<line x1="588" y1="541.5" x2="1646" y2="541.5" stroke="#b00000" stroke-dasharray="1 4"/>
<line x1="1647" y1="541.5" x2="1651" y2="541.5" stroke="#e00000"/>
<text x="1687" y="545.6" fill="#ff2020" font-size="12" font-family="Liberation Mono" letter-spacing="-0.5" text-anchor="end" >1914</text>
<line x1="588" y1="585.5" x2="1646" y2="585.5" stroke="#b00000" stroke-dasharray="1 4"/>
<line x1="1647" y1="585.5" x2="1651" y2="585.5" stroke="#e00000"/>
<text x="1687" y="589.8" fill="#ff2020" font-size="12" font-family="Liberation Mono" letter-spacing="-0.5" text-anchor="end" >1888</text>
<path d="M1648 321.5l7-7h33v14h-33z" fill="#fff"/>
<text x="1687" y="326" fill="#ff2020" font-size="12" font-family="Liberation Mono" letter-spacing="-0.5" text-anchor="end" >2042</text>
<line x1="588" y1="656.5" x2="1646" y2="656.5" stroke="#b00000" stroke-dasharray="1 4"/>
<line x1="1647" y1="656.5" x2="1651" y2="656.5" stroke="#e00000"/>
<text x="1687" y="660.0" fill="#ff2020" font-size="12" font-family="Liberation Mono" letter-spacing="-0.6" text-anchor="end" >25.21</text>
<line x1="588" y1="678.5" x2="1646" y2="678.5" stroke="#b00000" stroke-dasharray="1 4"/>
<line x1="1647" y1="678.5" x2="1651" y2="678.5" stroke="#e00000"/>
<text x="1687" y="682.1" fill="#ff2020" font-size="12" font-family="Liberation Mono" letter-spacing="-0.6" text-anchor="end" >14.97</text>
<line x1="588" y1="697.5" x2="1646" y2="697.5" stroke="#b00000" stroke-dasharray="1 4"/>
<line x1="1647" y1="697.5" x2="1651" y2="697.5" stroke="#e00000"/>
<text x="1687" y="701.5" fill="#ff2020" font-size="12" font-family="Liberation Mono" letter-spacing="-0.6" text-anchor="end" >4.72</text>
<line x1="588" y1="718.5" x2="1646" y2="718.5" stroke="#b00000" stroke-dasharray="1 4"/>
<line x1="1647" y1="718.5" x2="1651" y2="718.5" stroke="#e00000"/>
<text x="1687" y="722.5" fill="#ff2020" font-size="12" font-family="Liberation Mono" letter-spacing="-0.6" text-anchor="end" >-5.52</text>
<line x1="588" y1="739.5" x2="1646" y2="739.5" stroke="#b00000" stroke-dasharray="1 4"/>
<line x1="1647" y1="739.5" x2="1651" y2="739.5" stroke="#e00000"/>
<text x="1687" y="743.9" fill="#ff2020" font-size="12" font-family="Liberation Mono" letter-spacing="-0.6" text-anchor="end" >-16.25</text>
<line x1="588" y1="788.5" x2="1646" y2="788.5" stroke="#b00000" stroke-dasharray="1 4"/>
<line x1="1647" y1="788.5" x2="1651" y2="788.5" stroke="#e00000"/>
<text x="1687" y="792.5" fill="#ff2020" font-size="12" font-family="Liberation Mono" letter-spacing="-0.6" text-anchor="end" >65.0</text>
<line x1="588" y1="810.5" x2="1646" y2="810.5" stroke="#b00000" stroke-dasharray="1 4"/>
<line x1="1647" y1="810.5" x2="1651" y2="810.5" stroke="#e00000"/>
<text x="1687" y="815.0" fill="#ff2020" font-size="12" font-family="Liberation Mono" letter-spacing="-0.6" text-anchor="end" >56.4</text>
<line x1="588" y1="834.5" x2="1646" y2="834.5" stroke="#b00000" stroke-dasharray="1 4"/>
<line x1="1647" y1="834.5" x2="1651" y2="834.5" stroke="#e00000"/>
<text x="1687" y="838.5" fill="#ff2020" font-size="12" font-family="Liberation Mono" letter-spacing="-0.6" text-anchor="end" >47.9</text>
<line x1="588" y1="857.5" x2="1646" y2="857.5" stroke="#b00000" stroke-dasharray="1 4"/>
<line x1="1647" y1="857.5" x2="1651" y2="857.5" stroke="#e00000"/>
<text x="1687" y="861.1" fill="#ff2020" font-size="12" font-family="Liberation Mono" letter-spacing="-0.6" text-anchor="end" >39.3</text>
<line x1="588" y1="880.5" x2="1646" y2="880.5" stroke="#b00000" stroke-dasharray="1 4"/>
<line x1="1647" y1="880.5" x2="1651" y2="880.5" stroke="#e00000"/>
<text x="1687" y="884.5" fill="#ff2020" font-size="12" font-family="Liberation Mono" letter-spacing="-0.6" text-anchor="end" >30.4</text>
<line x1="588" y1="926.5" x2="1646" y2="926.5" stroke="#b00000" stroke-dasharray="1 4"/>
<line x1="1647" y1="926.5" x2="1651" y2="926.5" stroke="#e00000"/>
<text x="1687" y="930.5" fill="#ff2020" font-size="12" font-family="Liberation Mono" letter-spacing="-0.6" text-anchor="end" >200</text>
<line x1="588" y1="958.5" x2="1646" y2="958.5" stroke="#b00000" stroke-dasharray="1 4"/>
<line x1="1647" y1="958.5" x2="1651" y2="958.5" stroke="#e00000"/>
<text x="1687" y="962.5" fill="#ff2020" font-size="12" font-family="Liberation Mono" letter-spacing="-0.6" text-anchor="end" >100</text>
<rect x="1670.5" y="75.5" width="12" height="11" fill="none" stroke="#e00000"/><rect x="1673.5" y="78.5" width="6" height="5" fill="none" stroke="#e00000"/>
<rect x="1670.5" y="622.5" width="12" height="11" fill="none" stroke="#e00000"/><rect x="1673.5" y="625.5" width="6" height="5" fill="none" stroke="#e00000"/>
<rect x="1670.5" y="752.5" width="12" height="11" fill="none" stroke="#e00000"/><rect x="1673.5" y="755.5" width="6" height="5" fill="none" stroke="#e00000"/>
<rect x="1670.5" y="893.5" width="12" height="11" fill="none" stroke="#e00000"/><rect x="1673.5" y="896.5" width="6" height="5" fill="none" stroke="#e00000"/>
<text x="1655" y="614" fill="#ff2020" font-size="12" font-family="Liberation Sans" letter-spacing="0" text-anchor="start" >日线</text>
<line x1="596.5" y1="142" x2="596.5" y2="600" stroke="#e8e8e8"/>
<line x1="596.5" y1="636" x2="596.5" y2="747" stroke="#e8e8e8"/>
<line x1="596.5" y1="765" x2="596.5" y2="880" stroke="#e8e8e8"/>
<line x1="596.5" y1="904" x2="596.5" y2="984" stroke="#e8e8e8"/>
<polyline fill="none" stroke="#3a9ad8" stroke-width="1.2"  points="596,432 620,429 655,430 960,257 1030,258 1060,258.7 1076,253.5 1096,225 1137,181 1176,164 1200,174 1230,192 1274,218.5 1298,231.3 1336.4,239 1378,244.4 1395,243 1436.7,224.4 1474.7,220.2 1495.4,199.5 1516,185.7 1533.4,184.3 1554,189 1575,192.6 1595.7,188.4 1616.5,190.9"/>
<polyline fill="none" stroke="#10e010" stroke-width="1.3"  points="1380,522 1425,514 1445,508.6 1470,503.6 1490,500 1510,494.8 1535,494.3 1555,496 1580,494.8 1600,490.8 1615,486.5"/>
<line x1="587" y1="325.5" x2="1646" y2="325.5" stroke="#b8c8e8"/>
<text x="590" y="337" fill="#ff2020" font-size="12" font-family="Liberation Mono" letter-spacing="-0.4" text-anchor="start" >均价 2040</text>
<polyline fill="none" stroke="#30e0a0" stroke-width="2"  points="589,542.5 655,542.5"/>
<polyline fill="none" stroke="#30e0a0" stroke-width="2.2"  points="1258,355.3 1297,355.3 1307,357 1437,357 1474.7,355 1519.6,348 1616.5,348"/>
<polyline fill="none" stroke="#ffff00" stroke-width="2.5"  points="589,533 620,534 655,536"/>
<polyline fill="none" stroke="#ffff00" stroke-width="2.5"  points="1258,374 1297,379.7 1317,391 1330,393.5 1345,393.5 1365,391 1400,383.7 1430,376.4 1450,365.9 1474.7,363 1492,355 1519.6,343 1537,340.5 1561,343 1582,343 1602.6,339 1616.5,339"/>
<rect x="589.0" y="529" width="15" height="12" fill="#54ffff"/>
<line x1="636.5" y1="517" x2="636.5" y2="555" stroke="#54ffff"/><rect x="629.0" y="520" width="15" height="32" fill="#54ffff"/>
<line x1="1096.5" y1="194" x2="1096.5" y2="246" stroke="#ff0000"/><rect x="1089.5" y="246" width="14" height="16" fill="none" stroke="#ff0000"/>
<line x1="1116.5" y1="221" x2="1116.5" y2="262" stroke="#54ffff"/><line x1="1109.0" y1="249" x2="1124.0" y2="249" stroke="#54ffff"/>
<line x1="1136.5" y1="197" x2="1136.5" y2="235" stroke="#ff0000"/><line x1="1136.5" y1="250.4" x2="1136.5" y2="262" stroke="#ff0000"/><rect x="1129.5" y="235" width="14" height="15.400000000000006" fill="none" stroke="#ff0000"/>
<rect x="1149.0" y="230" width="15" height="32" fill="#54ffff"/>
<rect x="1249.5" y="364" width="14" height="35.5" fill="none" stroke="#ff0000"/>
<line x1="1276.5" y1="335" x2="1276.5" y2="409.8" stroke="#54ffff"/><rect x="1269.0" y="371" width="15" height="37.60000000000002" fill="#54ffff"/>
<line x1="1296.5" y1="386" x2="1296.5" y2="454" stroke="#54ffff"/><rect x="1289.0" y="410" width="15" height="23.80000000000001" fill="#54ffff"/>
<line x1="1316.5" y1="424" x2="1316.5" y2="454" stroke="#54ffff"/><rect x="1309.0" y="434" width="15" height="20" fill="#54ffff"/>
<line x1="1336.5" y1="405.4" x2="1336.5" y2="428.5" stroke="#ff0000"/><rect x="1329.5" y="428.5" width="14" height="31.5" fill="none" stroke="#ff0000"/>
<line x1="1356.5" y1="328" x2="1356.5" y2="347.5" stroke="#ff0000"/><rect x="1349.5" y="347.5" width="14" height="79.80000000000001" fill="none" stroke="#ff0000"/>
<line x1="1376.5" y1="319.2" x2="1376.5" y2="331.2" stroke="#ff0000"/><line x1="1376.5" y1="344.2" x2="1376.5" y2="374" stroke="#ff0000"/><rect x="1369.5" y="331.2" width="14" height="13.0" fill="none" stroke="#ff0000"/>
<line x1="1396.5" y1="299.7" x2="1396.5" y2="341.5" stroke="#ff0000"/><line x1="1389.0" y1="326" x2="1404.0" y2="326" stroke="#ff0000"/>
<line x1="1416.5" y1="282.5" x2="1416.5" y2="297.3" stroke="#ff0000"/><line x1="1416.5" y1="318.4" x2="1416.5" y2="351.7" stroke="#ff0000"/><rect x="1409.5" y="297.3" width="14" height="21.099999999999966" fill="none" stroke="#ff0000"/>
<line x1="1436.5" y1="262.4" x2="1436.5" y2="275.5" stroke="#ff0000"/><line x1="1436.5" y1="320" x2="1436.5" y2="344.7" stroke="#ff0000"/><rect x="1429.5" y="275.5" width="14" height="44.5" fill="none" stroke="#ff0000"/>
<line x1="1456.5" y1="241.7" x2="1456.5" y2="341" stroke="#54ffff"/><rect x="1449.0" y="274.9" width="15" height="54.900000000000034" fill="#54ffff"/>
<line x1="1476.5" y1="318" x2="1476.5" y2="355" stroke="#54ffff"/><rect x="1469.0" y="318" width="15" height="19.80000000000001" fill="#54ffff"/>
<line x1="1496.5" y1="143.2" x2="1496.5" y2="204" stroke="#ff0000"/><line x1="1496.5" y1="332.6" x2="1496.5" y2="343" stroke="#ff0000"/><rect x="1489.5" y="204" width="14" height="128.60000000000002" fill="none" stroke="#ff0000"/>
<line x1="1516.5" y1="209" x2="1516.5" y2="265.9" stroke="#54ffff"/><rect x="1509.0" y="212.6" width="15" height="29.099999999999994" fill="#54ffff"/>
<line x1="1536.5" y1="232" x2="1536.5" y2="299" stroke="#54ffff"/><rect x="1529.0" y="250.7" width="15" height="48.30000000000001" fill="#54ffff"/>
<line x1="1556.5" y1="279" x2="1556.5" y2="386" stroke="#54ffff"/><rect x="1549.0" y="293.9" width="15" height="92.10000000000002" fill="#54ffff"/>
<line x1="1576.5" y1="337.8" x2="1576.5" y2="341" stroke="#ff0000"/><line x1="1576.5" y1="390.3" x2="1576.5" y2="397.6" stroke="#ff0000"/><rect x="1569.5" y="341" width="14" height="49.30000000000001" fill="none" stroke="#ff0000"/>
<line x1="1596.5" y1="285" x2="1596.5" y2="295.6" stroke="#ff0000"/><rect x="1589.5" y="295.6" width="14" height="57.69999999999999" fill="none" stroke="#ff0000"/>
<line x1="1616.5" y1="317" x2="1616.5" y2="321" stroke="#ff0000"/><line x1="1616.5" y1="330" x2="1616.5" y2="366" stroke="#ff0000"/><rect x="1609.5" y="321" width="14" height="9" fill="none" stroke="#ff0000"/>
<line x1="616.5" y1="522" x2="616.5" y2="586" stroke="#ff0000"/>
<line x1="1176.5" y1="244" x2="1176.5" y2="262" stroke="#ff0000"/>
<rect x="1534" y="241" width="4" height="146" fill="#ff0000"/>
<polyline fill="none" stroke="#ff30ff" stroke-width="1.2"  points="596,551 616,545 655,547"/>
<polyline fill="none" stroke="#ff30ff" stroke-width="1.2"  points="1258,358 1297,393.5 1317,440.7 1336,436.6 1387,372.4 1437,319.5 1456,320 1476.4,326.7 1516,271 1533.4,279 1554,316 1575,324.6 1595.7,316 1616.5,318"/>
<path d="M1436.7 298L1456.7 338.5" stroke="#ff0000" stroke-width="4"/>
<line x1="1436.7" y1="297.5" x2="1474.7" y2="297.5" stroke="#ffff00" stroke-width="1.5"/>
<line x1="1514" y1="242.5" x2="1556" y2="242.5" stroke="#ffff00" stroke-width="1.5"/>
<path d="M1416 356l-6 7h4v9h4v-9h4z" fill="#ff0000"/>
<path d="M1516 272l-6 7h4v9h4v-9h4z" fill="#ff0000"/>
<path d="M1476.4 314l-6 -7h4v-9h4v9h4z" fill="#ff00ff"/>
<path d="M1556 276l-6 -7h4v-9h4v9h4z" fill="#ff00ff"/>
<path d="M1156 227l-6 -7h4v-9h4v9h4z" fill="#ff00ff"/>
<text x="1397" y="383" fill="#e02020" font-size="11" font-family="Liberation Sans" letter-spacing="-1" text-anchor="start" >近上叉多</text>
<text x="1397" y="396" fill="#e02020" font-size="11" font-family="Liberation Mono" letter-spacing="-0.5" text-anchor="start" >104</text>
<text x="1456" y="284" fill="#ff30ff" font-size="11" font-family="Liberation Mono" letter-spacing="-0.5" text-anchor="start" >-104</text>
<text x="1456" y="296" fill="#ff30ff" font-size="11" font-family="Liberation Sans" letter-spacing="-1" text-anchor="start" >近上已盈</text>
<text x="1496" y="297" fill="#e02020" font-size="11" font-family="Liberation Sans" letter-spacing="-1" text-anchor="start" >近上已多</text>
<text x="1496" y="309" fill="#e02020" font-size="11" font-family="Liberation Mono" letter-spacing="-0.5" text-anchor="start" >96</text>
<text x="1533" y="245" fill="#20c0c0" font-size="11" font-family="Liberation Mono" letter-spacing="-0.5" text-anchor="start" >96</text>
<text x="1544" y="257" fill="#20c0c0" font-size="11" font-family="Liberation Sans" letter-spacing="-1" text-anchor="start" >近上已多</text>
<text x="1136" y="195" fill="#ff30ff" font-size="11" font-family="Liberation Mono" letter-spacing="-0.5" text-anchor="start" >-95</text>
<text x="1136" y="208" fill="#ff30ff" font-size="11" font-family="Liberation Sans" letter-spacing="-1" text-anchor="start" >近上已盈</text>
<text x="1449" y="154" fill="#e8e8e8" font-size="12" font-family="Liberation Mono" letter-spacing="-0.5" text-anchor="start" >2146</text>
<line x1="1478" y1="149" x2="1496" y2="143" stroke="#e8e8e8"/>
<line x1="618" y1="586" x2="634" y2="579" stroke="#e8e8e8"/>
<text x="638" y="584" fill="#e8e8e8" font-size="12" font-family="Liberation Mono" letter-spacing="-0.5" text-anchor="start" >188</text>
<rect x="1570.5" y="595.5" width="75" height="3" fill="#102080" stroke="#e0e8f8"/>
<rect x="597" y="601" width="60" height="16" fill="#000080"/>
<rect x="587" y="601" width="10" height="16" fill="#000"/>
<text x="599" y="614" fill="#fff" font-size="12" font-family="Liberation Mono" letter-spacing="-0.6" text-anchor="start" >20/08/11</text>
<text x="589" y="632" fill="#e8e8e8" font-size="12" font-family="Liberation Mono" letter-spacing="-0.9" text-anchor="start" >MACDWKDAY</text>
<polyline fill="none" stroke="#ff0000" stroke-width="2"  points="596,717 620,716 655,716"/>
<polyline fill="none" stroke="#54ffff" stroke-width="1.5"  points="596,712 655,711.5"/>
<line x1="616.5" y1="707" x2="616.5" y2="712" stroke="#54ffff"/><line x1="636.5" y1="707" x2="636.5" y2="712" stroke="#54ffff"/>
<polyline fill="none" stroke="#ff0000" stroke-width="2.2"  points="1427,683 1477,683 1499,672 1521,667.6 1535,668 1549,676.5 1571,683 1615,683"/>
<polyline fill="none" stroke="#54ffff" stroke-width="2"  points="1427,689.7 1482.5,686.4 1527,679.2 1549,679 1615,681.4"/>
<line x1="1436.5" y1="697" x2="1436.5" y2="706" stroke="#ff0000"/>
<line x1="1456.5" y1="696" x2="1456.5" y2="706" stroke="#ff0000"/>
<line x1="1476.5" y1="699" x2="1476.5" y2="706" stroke="#ff0000"/>
<line x1="1496.5" y1="692" x2="1496.5" y2="706" stroke="#ff0000"/>
<line x1="1516.5" y1="691" x2="1516.5" y2="706" stroke="#ff0000"/>
<line x1="1536.5" y1="694" x2="1536.5" y2="706" stroke="#ff0000"/>
<line x1="1556.5" y1="706" x2="1556.5" y2="712" stroke="#54ffff"/>
<line x1="1576.5" y1="706" x2="1576.5" y2="712" stroke="#54ffff"/>
<line x1="1596.5" y1="706" x2="1596.5" y2="712" stroke="#54ffff"/>
<line x1="1616.5" y1="706" x2="1616.5" y2="712" stroke="#54ffff"/>
<text x="589" y="761" fill="#e8e8e8" font-size="12" font-family="Liberation Mono" letter-spacing="-0.6" text-anchor="start" >KDWDAY(5,3,3)</text>
<text x="688" y="761" fill="#ff0000" font-size="12" font-family="Liberation Sans" letter-spacing="0" text-anchor="start" >周KD</text>
<polyline fill="none" stroke="#54ffff" stroke-width="2"  points="596,797.5 655.4,797.5 675,808 710,808"/>
<polyline fill="none" stroke="#ff0000" stroke-width="2.2"  points="596,870 615.7,867.7 634,875 658,875 676.5,880 696,860 710,848"/>
<polyline fill="none" stroke="#54ffff" stroke-width="2"  points="1420,797 1493.6,795 1615,795"/>
<polyline fill="none" stroke="#ff0000" stroke-width="2.2"  points="1420,826 1455,821 1476,825 1496,796.4 1515.7,802 1555.5,829.5 1576.5,821 1596,810 1615,815.7"/>
<text x="589" y="901" fill="#e8e8e8" font-size="12" font-family="Liberation Mono" letter-spacing="-0.6" text-anchor="start" >持交量 VOLUME:242830</text>
<rect x="609.5" y="977.5" width="14" height="12.5" fill="none" stroke="#ff0000"/>
<rect x="629.0" y="981.7" width="15" height="3.2999999999999545" fill="#54ffff"/>
<rect x="649.0" y="976.7" width="15" height="8.299999999999955" fill="#54ffff"/>
<rect x="669.0" y="976.7" width="15" height="8.299999999999955" fill="#54ffff"/>
<rect x="689.5" y="964.3" width="14" height="25.700000000000045" fill="none" stroke="#ff0000"/>
<rect x="709.0" y="968.5" width="15" height="16.5" fill="#54ffff"/>
<rect x="729.0" y="960" width="15" height="25" fill="#54ffff"/>
<rect x="749.5" y="962.4" width="14" height="27.600000000000023" fill="none" stroke="#ff0000"/>
<rect x="769.5" y="955" width="14" height="35" fill="none" stroke="#ff0000"/>
<rect x="789.5" y="968" width="14" height="22" fill="none" stroke="#ff0000"/>
<rect x="809.5" y="962.4" width="14" height="27.600000000000023" fill="none" stroke="#ff0000"/>
<rect x="829.0" y="970" width="15" height="15" fill="#54ffff"/>
<rect x="849.0" y="960.6" width="15" height="24.399999999999977" fill="#54ffff"/>
<rect x="869.5" y="960" width="14" height="30" fill="none" stroke="#ff0000"/>
<rect x="889.5" y="944" width="14" height="46" fill="none" stroke="#ff0000"/>
<rect x="909.5" y="951" width="14" height="39" fill="none" stroke="#ff0000"/>
<rect x="929.0" y="960" width="15" height="25" fill="#54ffff"/>
<rect x="949.5" y="949.5" width="14" height="40.5" fill="none" stroke="#ff0000"/>
<rect x="969.0" y="943.8" width="15" height="41.200000000000045" fill="#54ffff"/>
<rect x="989.0" y="954.9" width="15" height="30.100000000000023" fill="#54ffff"/>
<rect x="1009.0" y="938" width="15" height="47" fill="#54ffff"/>
<rect x="1029.0" y="954" width="15" height="31" fill="#54ffff"/>
<rect x="1049.5" y="960.3" width="14" height="29.700000000000045" fill="none" stroke="#ff0000"/>
<rect x="1069.5" y="961.3" width="14" height="28.700000000000045" fill="none" stroke="#ff0000"/>
<rect x="1089.5" y="927.4" width="14" height="62.60000000000002" fill="none" stroke="#ff0000"/>
<rect x="1109.0" y="950" width="15" height="35" fill="#54ffff"/>
<rect x="1129.5" y="942.2" width="14" height="47.799999999999955" fill="none" stroke="#ff0000"/>
<rect x="1149.0" y="944" width="15" height="41" fill="#54ffff"/>
<rect x="1169.5" y="945.5" width="14" height="44.5" fill="none" stroke="#ff0000"/>
<rect x="1189.0" y="940" width="15" height="45" fill="#54ffff"/>
<rect x="1209.0" y="957.7" width="15" height="27.299999999999955" fill="#54ffff"/>
<rect x="1229.0" y="950" width="15" height="35" fill="#54ffff"/>
<rect x="1249.5" y="963" width="14" height="27" fill="none" stroke="#ff0000"/>
<rect x="1269.0" y="956.6" width="15" height="28.399999999999977" fill="#54ffff"/>
<rect x="1289.0" y="952.7" width="15" height="32.299999999999955" fill="#54ffff"/>
<rect x="1309.0" y="956.6" width="15" height="28.399999999999977" fill="#54ffff"/>
<rect x="1329.5" y="972" width="14" height="18" fill="none" stroke="#ff0000"/>
<rect x="1349.5" y="957.7" width="14" height="32.299999999999955" fill="none" stroke="#ff0000"/>
<rect x="1369.5" y="962" width="14" height="28" fill="none" stroke="#ff0000"/>
<rect x="1389.5" y="961" width="14" height="29" fill="none" stroke="#ff0000"/>
<rect x="1409.5" y="956.6" width="14" height="33.39999999999998" fill="none" stroke="#ff0000"/>
<rect x="1429.5" y="941.7" width="14" height="48.299999999999955" fill="none" stroke="#ff0000"/>
<rect x="1449.0" y="944" width="15" height="41" fill="#54ffff"/>
<rect x="1469.0" y="966" width="15" height="19" fill="#54ffff"/>
<rect x="1489.5" y="905.7" width="14" height="84.29999999999995" fill="none" stroke="#ff0000"/>
<rect x="1509.0" y="947" width="15" height="38" fill="#54ffff"/>
<rect x="1529.0" y="944.4" width="15" height="40.60000000000002" fill="#54ffff"/>
<rect x="1549.0" y="938.3" width="15" height="46.700000000000045" fill="#54ffff"/>
<rect x="1569.5" y="952.7" width="14" height="37.299999999999955" fill="none" stroke="#ff0000"/>
<rect x="1589.5" y="941" width="14" height="49" fill="none" stroke="#ff0000"/>
<rect x="1609.5" y="955.5" width="14" height="34.5" fill="none" stroke="#ff0000"/>
<polyline fill="none" stroke="#30d030" stroke-width="1.2"  points="596,981.7 685,978 759.5,964.3 834,963 871,963 908,957 982.6,950.7 993,952.5 1010,949.6 1030,948.4 1050,949 1075,954 1090,949.5 1100,948.5 1120,950 1140,950.4 1160,946 1175,945 1195,942.5 1210,943.5 1250.5,951 1333.5,959.5 1416,959.5 1471.5,952 1516,940 1576.5,937 1615,945.5"/>
</svg>
<div class="a" style="left:590px;top:72px;width:24px;height:15px;border:1px solid #e00000;background:#333;border-radius:2px"></div>
<div class="a" style="left:603px;top:72px;width:1px;height:15px;background:#e00000"></div>
<div class="a m" style="left:594px;top:72px;color:#ddd;font-size:10px">K</div>
<svg class="a" style="left:605px;top:78px" width="8" height="5"><path d="M0 0h7l-3.5 4z" fill="#ff0000"/></svg>
<div class="a m" style="left:617px;top:71px;color:#ff0000;font-size:14px;font-weight:bold">$</div>
<div class="a nw m" style="left:630px;top:72px;color:#e8e8e8;font-size:12px;line-height:14px"><span style="letter-spacing:0">甲醇</span><span style="letter-spacing:-0.6px">2101(</span><span style="letter-spacing:0">日线</span></div>
<div class="a nw m" style="left:724px;top:72px;color:#e8e8e8;font-size:12px;line-height:14px"><span style="letter-spacing:0">复权</span><span style="letter-spacing:-0.6px">)</span></div>
<div class="a nw m" style="left:761px;top:72px;color:#e8e8e8;font-size:12px;line-height:14px"><span style="letter-spacing:-0.6px">20/08/11</span></div>
<div class="a nw m" style="left:825px;top:72px;color:#e8e8e8;font-size:12px;line-height:14px"><span style="letter-spacing:0">开</span><span style="letter-spacing:-0.6px">1921</span><svg width="13" height="13" style="vertical-align:-2px"><path d="M6.5 1.5v11M3 5l3.5-4 3.5 4" stroke="currentColor" stroke-width="1.3" fill="none"/></svg></div>
<div class="a nw m" style="left:878px;top:72px;color:#ff0000;font-size:12px;line-height:14px"><span style="letter-spacing:0">高</span><span style="letter-spacing:-0.6px">1924</span><svg width="13" height="13" style="vertical-align:-2px"><path d="M6.5 0.5v11M3 8l3.5 4 3.5-4" stroke="currentColor" stroke-width="1.3" fill="none"/></svg></div>
<div class="a nw m" style="left:933px;top:72px;color:#40e8f0;font-size:12px;line-height:14px"><span style="letter-spacing:0">低</span><span style="letter-spacing:-0.6px">1910</span><svg width="13" height="13" style="vertical-align:-2px"><path d="M6.5 1.5v11M3 5l3.5-4 3.5 4" stroke="currentColor" stroke-width="1.3" fill="none"/></svg><span style="letter-spacing:0">收</span><span style="letter-spacing:-0.6px">1914</span><svg width="13" height="13" style="vertical-align:-2px"><path d="M6.5 0.5v11M3 8l3.5 4 3.5-4" stroke="currentColor" stroke-width="1.3" fill="none"/></svg></div>
<div class="a nw m" style="left:1041px;top:72px;color:#e0c000;font-size:12px;line-height:14px"><span style="letter-spacing:0">量</span><span style="letter-spacing:-0.6px">242830</span></div>
<div class="a nw m" style="left:1102px;top:72px;color:#00c8ff;font-size:12px;line-height:14px"><span style="letter-spacing:0">额</span><span style="letter-spacing:-0.6px">46.5</span><span style="letter-spacing:0">亿</span></div>
<div class="a nw m" style="left:1163px;top:72px;color:#e0c000;font-size:12px;line-height:14px"><span style="letter-spacing:0">持</span><span style="letter-spacing:-0.6px">541816</span></div>
<div class="a nw m" style="left:1224px;top:72px;color:#40e8f0;font-size:12px;line-height:14px"><span style="letter-spacing:0">跌</span><span style="letter-spacing:-0.6px">(7)0.36%</span></div>
<div class="a nw m" style="left:589px;top:89px;color:#e8e8e8;font-size:12px;line-height:14px"><span style="letter-spacing:-0.6px">MYMA(2)</span></div>
<div class="a nw m" style="left:645px;top:89px;color:#ff20ff;font-size:12px;line-height:14px"><span style="letter-spacing:-0.6px">EMA5:1908.712</span><svg width="13" height="13" style="vertical-align:-2px"><path d="M6.5 1.5v11M3 5l3.5-4 3.5 4" stroke="currentColor" stroke-width="1.3" fill="none"/></svg></div>
<div class="a nw m" style="left:750px;top:89px;color:#ffff00;font-size:12px;line-height:14px"><span style="letter-spacing:-0.6px">EMA26:1918.877</span><svg width="13" height="13" style="vertical-align:-2px"><path d="M6.5 0.5v11M3 8l3.5 4 3.5-4" stroke="currentColor" stroke-width="1.3" fill="none"/></svg></div>
<div class="a nw m" style="left:861px;top:89px;color:#00e0a0;font-size:12px;line-height:14px"><span style="letter-spacing:-0.6px">KMA26:1912.6</span><svg width="13" height="13" style="vertical-align:-2px"><path d="M6.5 1.5v11M3 5l3.5-4 3.5 4" stroke="currentColor" stroke-width="1.3" fill="none"/></svg></div>
<div class="a nw m" style="left:960px;top:89px;color:#3898e0;font-size:12px;line-height:14px"><span style="letter-spacing:0">上限</span><span style="letter-spacing:-0.6px">:1977.348</span><svg width="13" height="13" style="vertical-align:-2px"><path d="M6.5 0.5v11M3 8l3.5 4 3.5-4" stroke="currentColor" stroke-width="1.3" fill="none"/></svg></div>
<div class="a nw m" style="left:1064px;top:89px;color:#00ff00;font-size:12px;line-height:14px"><span style="letter-spacing:0">下限</span><span style="letter-spacing:-0.6px">:1860.406</span><svg width="13" height="13" style="vertical-align:-2px"><path d="M6.5 0.5v11M3 8l3.5 4 3.5-4" stroke="currentColor" stroke-width="1.3" fill="none"/></svg></div>
<div class="a nw m" style="left:1166px;top:89px;color:#40e8f0;font-size:12px;line-height:14px"><span style="letter-spacing:0">标准差</span><span style="letter-spacing:-0.6px">:58.471</span><svg width="13" height="13" style="vertical-align:-2px"><path d="M6.5 0.5v11M3 8l3.5 4 3.5-4" stroke="currentColor" stroke-width="1.3" fill="none"/></svg></div>
<svg class="a" style="left:592px;top:104px" width="12" height="32"><path d="M5 3.5l-4.5 4.5h3v5.5h3v-5.5h3z M5 19.5l-4.5 4.5h3v5.5h3v-5.5h3z" fill="#ff0000"/></svg>
<div class="a nw m" style="left:609px;top:104px;color:#e8e8e8;font-size:12px;line-height:14px"><span style="letter-spacing:0">日</span><span style="letter-spacing:-0.6px">MACD</span><span style="letter-spacing:0">周</span><span style="letter-spacing:-0.6px">KD  </span><span style="letter-spacing:0">持仓</span><span style="letter-spacing:-0.6px">:-100</span><svg width="13" height="13" style="vertical-align:-2px"><path d="M6.5 0.5v11M3 8l3.5 4 3.5-4" stroke="currentColor" stroke-width="1.3" fill="none"/></svg></div>
<div class="a nw m" style="left:758px;top:104px;color:#ff0000;font-size:12px;line-height:14px"><span style="letter-spacing:0">胜率</span><span style="letter-spacing:-0.6px">:50</span></div>
<div class="a nw m" style="left:810px;top:104px;color:#ff2080;font-size:12px;line-height:14px"><span style="letter-spacing:0">净利润</span><span style="letter-spacing:-0.6px">:326313.936</span></div>
<div class="a nw m" style="left:933px;top:104px;color:#ffff00;font-size:12px;line-height:14px"><span style="letter-spacing:0">上次盈亏</span><span style="letter-spacing:-0.6px">:18810.023</span></div>
<div class="a nw m" style="left:1060px;top:104px;color:#ff20ff;font-size:12px;line-height:14px"><span style="letter-spacing:0">浮动盈亏</span><span style="letter-spacing:-0.6px">:6400.024</span><svg width="13" height="13" style="vertical-align:-2px"><path d="M6.5 1.5v11M3 5l3.5-4 3.5 4" stroke="currentColor" stroke-width="1.3" fill="none"/></svg></div>
<div class="a nw m" style="left:1187px;top:104px;color:#ff20ff;font-size:12px;line-height:14px"><span style="letter-spacing:-0.6px">KD:0 KK:1</span></div>
<div class="a nw m" style="left:1257px;top:104px;color:#e8e8e8;font-size:12px;line-height:14px"><span style="letter-spacing:0">近下已空价</span><span style="letter-spacing:-0.6px">:1921</span><svg width="13" height="13" style="vertical-align:-2px"><path d="M6.5 1.5v11M3 5l3.5-4 3.5 4" stroke="currentColor" stroke-width="1.3" fill="none"/></svg></div>
<div class="a nw m" style="left:609px;top:120px;color:#e8e8e8;font-size:12px;line-height:14px"><span style="letter-spacing:0">日内</span><span style="letter-spacing:-0.6px">MACDKD  </span><span style="letter-spacing:0">持仓</span><span style="letter-spacing:-0.6px">:0</span></div>
<div class="a nw m" style="left:730px;top:120px;color:#ff0000;font-size:12px;line-height:14px"><span style="letter-spacing:0">胜率</span><span style="letter-spacing:-0.6px">:0</span></div>
<div class="a nw m" style="left:775px;top:120px;color:#ff2080;font-size:12px;line-height:14px"><span style="letter-spacing:0">净利润</span><span style="letter-spacing:-0.6px">:0</span></div>
<div class="a nw m" style="left:833px;top:120px;color:#ffff00;font-size:12px;line-height:14px"><span style="letter-spacing:0">上次盈亏</span><span style="letter-spacing:-0.6px">:0</span></div>
<div class="a nw m" style="left:906px;top:120px;color:#ff20ff;font-size:12px;line-height:14px"><span style="letter-spacing:0">浮动盈亏</span><span style="letter-spacing:-0.6px">:0</span></div>
<div class="a nw m" style="left:977px;top:120px;color:#ff20ff;font-size:12px;line-height:14px"><span style="letter-spacing:-0.6px">RKD:0</span></div>
<div class="a nw m" style="left:1018px;top:120px;color:#ff20ff;font-size:12px;line-height:14px"><span style="letter-spacing:-0.6px">RKK:0</span></div>
<div class="a nw" style="left:1523px;top:71px;width:32px;height:15px;border:1px solid #e00000;background:#2a2a2a;color:#ddd;font-size:12px;line-height:13px;text-align:center">时段</div>
<div class="a nw" style="left:1560px;top:71px;width:43px;height:15px;border:1px solid #e00000;background:#2a2a2a;color:#ddd;font-size:12px;line-height:13px;text-align:center">补数据</div>
<svg class="a" style="left:1608px;top:71px" width="80" height="18"><circle cx="8" cy="8" r="6" fill="#ddd"/><circle cx="8" cy="8" r="3.5" fill="#444"/><rect x="19.5" y="1.5" width="15" height="15" fill="#000" stroke="#ddd"/><path d="M27 2l7 7-7 7-7-7z" fill="#00e000"/><line x1="27" y1="2" x2="27" y2="16" stroke="#c00"/><path d="M43 3v10M39 7q4 8 8 0M40 4h6" stroke="#ff2020" stroke-width="2" fill="none"/></svg>
<div class="a" style="left:1688px;top:97px;width:160px;height:1px;background:#e00000"></div>
<div class="a" style="left:1688px;top:119px;width:160px;height:1px;background:#e00000"></div>
<div class="a" style="left:1688px;top:144px;width:160px;height:1px;background:#e00000"></div>
<div class="a" style="left:1688px;top:168px;width:160px;height:1px;background:#e00000"></div>
<div class="a" style="left:1719px;top:119px;width:1px;height:49px;background:#e00000"></div>
<div class="a" style="left:1688px;top:342px;width:160px;height:1px;background:#e00000"></div>
<div class="a" style="left:1688px;top:488px;width:160px;height:1px;background:#e00000"></div>
<div class="a nw" style="left:1711px;top:74px;color:#ffff00;font-size:17px;font-weight:bold;line-height:20px">MA01</div>
<div class="a nw" style="left:1769px;top:74px;color:#ffff00;font-size:17px;font-weight:bold;line-height:20px;letter-spacing:-0.3px">甲醇2101</div>
<div class="a nw" style="left:1691px;top:101px;color:#c8c8c8;font-size:13px;line-height:16px;">委比</div>
<div class="a nw" style="left:1672px;top:101px;width:120px;text-align:right;color:#00ff00;font-size:13px;line-height:16px;">-51.72%</div>
<div class="a nw" style="left:1802px;top:101px;color:#c8c8c8;font-size:13px;line-height:16px;">委差</div>
<div class="a nw" style="left:1698px;top:125px;color:#00ff00;font-size:14px;line-height:16px;">卖</div>
<div class="a nw" style="left:1676px;top:124px;width:120px;text-align:right;color:#00ff00;font-size:16px;line-height:16px;font-weight:bold">2042</div>
<div class="a nw" style="left:1833px;top:124px;color:#00ff00;font-size:16px;line-height:16px;font-weight:bold">90</div>
<div class="a nw" style="left:1698px;top:150px;color:#ff0000;font-size:14px;line-height:16px;">买</div>
<div class="a nw" style="left:1676px;top:149px;width:120px;text-align:right;color:#00ff00;font-size:16px;line-height:16px;font-weight:bold">2041</div>
<div class="a nw" style="left:1833px;top:149px;color:#ff0000;font-size:16px;line-height:16px;font-weight:bold">28</div>
<div class="a nw" style="left:1691px;top:173px;color:#c8c8c8;font-size:13px;line-height:16px;">最新</div>
<div class="a nw" style="left:1672px;top:173px;width:120px;text-align:right;color:#ff2020;font-size:13px;line-height:16px;">2042</div>
<div class="a nw" style="left:1802px;top:173px;color:#c8c8c8;font-size:13px;line-height:16px;">均价</div>
<div class="a nw" style="left:1691px;top:192px;color:#c8c8c8;font-size:13px;line-height:16px;">涨跌</div>
<div class="a nw" style="left:1672px;top:192px;width:120px;text-align:right;color:#ff2020;font-size:13px;line-height:16px;">2</div>
<div class="a nw" style="left:1802px;top:192px;color:#c8c8c8;font-size:13px;line-height:16px;">前结</div>
<div class="a nw" style="left:1691px;top:211px;color:#c8c8c8;font-size:13px;line-height:16px;">幅度</div>
<div class="a nw" style="left:1672px;top:211px;width:120px;text-align:right;color:#ff2020;font-size:13px;line-height:16px;">+0.10%</div>
<div class="a nw" style="left:1802px;top:211px;color:#c8c8c8;font-size:13px;line-height:16px;">今开</div>
<div class="a nw" style="left:1691px;top:230px;color:#c8c8c8;font-size:13px;line-height:16px;">振幅</div>
<div class="a nw" style="left:1672px;top:230px;width:120px;text-align:right;color:#c8c8c8;font-size:13px;line-height:16px;">1.37%</div>
<div class="a nw" style="left:1802px;top:230px;color:#c8c8c8;font-size:13px;line-height:16px;">最高</div>
<div class="a nw" style="left:1691px;top:249px;color:#c8c8c8;font-size:13px;line-height:16px;">总手</div>
<div class="a nw" style="left:1672px;top:249px;width:120px;text-align:right;color:#c8c800;font-size:13px;line-height:16px;">1085556</div>
<div class="a nw" style="left:1802px;top:249px;color:#c8c8c8;font-size:13px;line-height:16px;">最低</div>
<div class="a nw" style="left:1691px;top:268px;color:#c8c8c8;font-size:13px;line-height:16px;">金额</div>
<div class="a nw" style="left:1672px;top:268px;width:120px;text-align:right;color:#00e0ff;font-size:13px;line-height:16px;">220亿</div>
<div class="a nw" style="left:1802px;top:268px;color:#c8c8c8;font-size:13px;line-height:16px;">量比</div>
<div class="a nw" style="left:1691px;top:287px;color:#c8c8c8;font-size:13px;line-height:16px;">持仓</div>
<div class="a nw" style="left:1672px;top:287px;width:120px;text-align:right;color:#c8c800;font-size:13px;line-height:16px;">1030365</div>
<div class="a nw" style="left:1802px;top:287px;color:#c8c8c8;font-size:13px;line-height:16px;">增仓</div>
<div class="a nw" style="left:1691px;top:306px;color:#c8c8c8;font-size:13px;line-height:16px;">涨停</div>
<div class="a nw" style="left:1672px;top:306px;width:120px;text-align:right;color:#ff2020;font-size:13px;line-height:16px;">2163</div>
<div class="a nw" style="left:1802px;top:306px;color:#c8c8c8;font-size:13px;line-height:16px;">跌停</div>
<div class="a nw" style="left:1691px;top:325px;color:#c8c8c8;font-size:13px;line-height:16px;">总笔</div>
<div class="a nw" style="left:1672px;top:325px;width:120px;text-align:right;color:#c8c800;font-size:13px;line-height:16px;">28536</div>
<div class="a nw" style="left:1802px;top:325px;color:#c8c8c8;font-size:13px;line-height:16px;">均量</div>
<div class="a nw" style="left:1691px;top:347px;color:#c8c8c8;font-size:13px;line-height:16px;">外盘</div>
<div class="a nw" style="left:1672px;top:347px;width:120px;text-align:right;color:#ff2020;font-size:13px;line-height:16px;">547994</div>
<div class="a nw" style="left:1802px;top:347px;color:#c8c8c8;font-size:13px;line-height:16px;">内盘</div>
<svg class="a" style="left:1689px;top:489px" width="159" height="495" font-family="Liberation Mono" font-size="12" letter-spacing="-0.6"><text x="10.5" y="11.2" fill="#d8d8d8">2040</text><text x="108" y="11.2" fill="#d8d8d8" text-anchor="end">864</text><rect x="114" y="-0.3" width="20" height="14" fill="#ff0000"/><text x="10.5" y="30.2" fill="#d8d8d8">2039</text><text x="108" y="30.2" fill="#d8d8d8" text-anchor="end">765</text><rect x="114" y="18.7" width="17" height="14" fill="#ff0000"/><text x="10.5" y="49.2" fill="#d8d8d8">2038</text><text x="108" y="49.2" fill="#d8d8d8" text-anchor="end">702</text><rect x="114" y="37.7" width="16" height="14" fill="#ff0000"/><text x="10.5" y="68.2" fill="#d8d8d8">2037</text><text x="108" y="68.2" fill="#d8d8d8" text-anchor="end">303</text><rect x="114" y="56.7" width="5" height="14" fill="#ff0000"/><text x="10.5" y="87.2" fill="#d8d8d8">2036</text><text x="108" y="87.2" fill="#d8d8d8" text-anchor="end">879</text><rect x="114" y="75.7" width="20" height="14" fill="#ff0000"/><text x="10.5" y="106.2" fill="#d8d8d8">2035</text><text x="108" y="106.2" fill="#d8d8d8" text-anchor="end">1110</text><rect x="114" y="94.7" width="27" height="14" fill="#ff0000"/><text x="10.5" y="125.2" fill="#d8d8d8">2034</text><text x="108" y="125.2" fill="#d8d8d8" text-anchor="end">755</text><rect x="114" y="113.7" width="17" height="14" fill="#ff0000"/><text x="10.5" y="144.2" fill="#d8d8d8">2033</text><text x="108" y="144.2" fill="#d8d8d8" text-anchor="end">713</text><rect x="114" y="132.7" width="16" height="14" fill="#ff0000"/><text x="10.5" y="163.2" fill="#d8d8d8">2032</text><text x="108" y="163.2" fill="#d8d8d8" text-anchor="end">695</text><rect x="114" y="151.7" width="15" height="14" fill="#ff0000"/><text x="10.5" y="182.2" fill="#d8d8d8">2031</text><text x="108" y="182.2" fill="#d8d8d8" text-anchor="end">759</text><rect x="114" y="170.7" width="17" height="14" fill="#ff0000"/><text x="10.5" y="201.2" fill="#d8d8d8">2030</text><text x="108" y="201.2" fill="#d8d8d8" text-anchor="end">716</text><rect x="114" y="189.7" width="16" height="14" fill="#ff0000"/><text x="10.5" y="220.2" fill="#d8d8d8">2029</text><text x="108" y="220.2" fill="#d8d8d8" text-anchor="end">410</text><rect x="114" y="208.7" width="8" height="14" fill="#ff0000"/><text x="10.5" y="239.2" fill="#d8d8d8">2028</text><text x="108" y="239.2" fill="#d8d8d8" text-anchor="end">645</text><rect x="114" y="227.7" width="14" height="14" fill="#ff0000"/><text x="10.5" y="258.2" fill="#d8d8d8">2027</text><text x="108" y="258.2" fill="#d8d8d8" text-anchor="end">744</text><rect x="114" y="246.7" width="17" height="14" fill="#ff0000"/><text x="10.5" y="277.2" fill="#d8d8d8">2026</text><text x="108" y="277.2" fill="#d8d8d8" text-anchor="end">137</text><rect x="114" y="265.7" width="4" height="14" fill="#ff0000"/><text x="10.5" y="296.2" fill="#d8d8d8">2025</text><text x="108" y="296.2" fill="#d8d8d8" text-anchor="end">563</text><rect x="114" y="284.7" width="12" height="14" fill="#ff0000"/><text x="10.5" y="315.2" fill="#d8d8d8">2024</text><text x="108" y="315.2" fill="#d8d8d8" text-anchor="end">726</text><rect x="114" y="303.7" width="16" height="14" fill="#ff0000"/><text x="10.5" y="334.2" fill="#d8d8d8">2023</text><text x="108" y="334.2" fill="#d8d8d8" text-anchor="end">796</text><rect x="114" y="322.7" width="18" height="14" fill="#ff0000"/><text x="10.5" y="353.2" fill="#d8d8d8">2022</text><text x="108" y="353.2" fill="#d8d8d8" text-anchor="end">906</text><rect x="114" y="341.7" width="21" height="14" fill="#ff0000"/><text x="10.5" y="372.2" fill="#d8d8d8">2021</text><text x="108" y="372.2" fill="#d8d8d8" text-anchor="end">680</text><rect x="114" y="360.7" width="15" height="14" fill="#ff0000"/><text x="10.5" y="391.2" fill="#d8d8d8">2020</text><text x="108" y="391.2" fill="#d8d8d8" text-anchor="end">1540</text><rect x="114" y="379.7" width="38" height="14" fill="#ff0000"/><text x="10.5" y="410.2" fill="#d8d8d8">2019</text><text x="108" y="410.2" fill="#d8d8d8" text-anchor="end">869</text><rect x="114" y="398.7" width="20" height="14" fill="#ff0000"/><text x="10.5" y="429.2" fill="#d8d8d8">2018</text><text x="108" y="429.2" fill="#d8d8d8" text-anchor="end">1374</text><rect x="114" y="417.7" width="34" height="14" fill="#ff0000"/><text x="10.5" y="448.2" fill="#d8d8d8">2017</text><text x="108" y="448.2" fill="#d8d8d8" text-anchor="end">696</text><rect x="114" y="436.7" width="15" height="14" fill="#ff0000"/><text x="10.5" y="467.2" fill="#d8d8d8">2016</text><text x="108" y="467.2" fill="#d8d8d8" text-anchor="end">1252</text><rect x="114" y="455.7" width="30" height="14" fill="#ff0000"/><text x="10.5" y="486.2" fill="#d8d8d8">2015</text><text x="108" y="486.2" fill="#d8d8d8" text-anchor="end">2707</text><rect x="114" y="474.7" width="70" height="14" fill="#ff0000"/></svg>
<div class="a" style="left:655px;top:260px;width:603px;height:488px;background:#f0f0f0;border:1px solid #a0a0a0;box-shadow:0 0 6px rgba(0,0,0,.4)"></div>
<div class="a" style="left:656px;top:261px;width:601px;height:25px;background:#fff"></div>
<div class="a nw" style="left:660px;top:265px;color:#999;font-size:13px;line-height:14px;">自定义数据管理</div>
<svg class="a" style="left:1237px;top:266px" width="12" height="12"><path d="M1 1l10 10M11 1l-10 10" stroke="#777" stroke-width="1.1"/></svg>
<div class="a" style="left:667px;top:296px;width:477px;height:354px;background:#fff;border:1px solid #828790;box-shadow:inset 1px 1px 0 #a0a0a0"></div>
<div class="a" style="left:668px;top:321px;width:475px;height:1px;background:#d5d5d5"></div>
<div class="a" style="left:690px;top:298px;width:1px;height:22px;background:#e5e5e5"></div>
<div class="a" style="left:690px;top:322px;width:1px;height:310px;background:#f0f0f0"></div>
<div class="a" style="left:780px;top:298px;width:1px;height:22px;background:#e5e5e5"></div>
<div class="a" style="left:780px;top:322px;width:1px;height:310px;background:#f0f0f0"></div>
<div class="a" style="left:1003px;top:298px;width:1px;height:22px;background:#e5e5e5"></div>
<div class="a" style="left:1003px;top:322px;width:1px;height:310px;background:#f0f0f0"></div>
<div class="a" style="left:1090px;top:298px;width:1px;height:22px;background:#e5e5e5"></div>
<div class="a" style="left:1090px;top:322px;width:1px;height:310px;background:#f0f0f0"></div>
<div class="a nw" style="left:673px;top:303px;color:#000;font-size:12px;line-height:14px;overflow:hidden;width:17px">序</div>
<div class="a nw" style="left:696px;top:303px;color:#000;font-size:12px;line-height:14px;overflow:hidden;width:84px">名称</div>
<div class="a nw" style="left:786px;top:303px;color:#000;font-size:12px;line-height:14px;overflow:hidden;width:217px">描述</div>
<div class="a nw" style="left:1009px;top:303px;color:#000;font-size:12px;line-height:14px;overflow:hidden;width:81px">属性</div>
<div class="a nw" style="left:1096px;top:303px;color:#000;font-size:12px;line-height:14px;overflow:hidden;width:47px">数据来源</div>
<div class="a" style="left:668px;top:322px;width:475px;height:16px;background:#e8e8e8"></div>
<div class="a" style="left:668px;top:338px;width:475px;height:1px;background:#f0f0f0"></div>
<div class="a" style="left:668px;top:354px;width:475px;height:1px;background:#f0f0f0"></div>
<div class="a" style="left:668px;top:370px;width:475px;height:1px;background:#f0f0f0"></div>
<div class="a" style="left:668px;top:386px;width:475px;height:1px;background:#f0f0f0"></div>
<div class="a" style="left:668px;top:402px;width:475px;height:1px;background:#f0f0f0"></div>
<div class="a" style="left:668px;top:418px;width:475px;height:1px;background:#f0f0f0"></div>
<div class="a" style="left:668px;top:434px;width:475px;height:1px;background:#f0f0f0"></div>
<div class="a" style="left:668px;top:450px;width:475px;height:1px;background:#f0f0f0"></div>
<div class="a" style="left:668px;top:466px;width:475px;height:1px;background:#f0f0f0"></div>
<div class="a" style="left:668px;top:482px;width:475px;height:1px;background:#f0f0f0"></div>
<div class="a" style="left:668px;top:498px;width:475px;height:1px;background:#f0f0f0"></div>
<div class="a" style="left:668px;top:514px;width:475px;height:1px;background:#f0f0f0"></div>
<div class="a" style="left:668px;top:530px;width:475px;height:1px;background:#f0f0f0"></div>
<div class="a" style="left:668px;top:546px;width:475px;height:1px;background:#f0f0f0"></div>
<div class="a" style="left:668px;top:562px;width:475px;height:1px;background:#f0f0f0"></div>
<div class="a" style="left:668px;top:578px;width:475px;height:1px;background:#f0f0f0"></div>
<div class="a" style="left:668px;top:594px;width:475px;height:1px;background:#f0f0f0"></div>
<div class="a" style="left:668px;top:610px;width:475px;height:1px;background:#f0f0f0"></div>
<div class="a" style="left:668px;top:626px;width:475px;height:1px;background:#f0f0f0"></div>
<div class="a nw" style="left:674px;top:323px;color:#000;font-size:12px;line-height:14px;">1</div>
<div class="a nw" style="left:695px;top:323px;color:#000;font-size:12px;line-height:14px;">日多</div>
<div class="a nw" style="left:786px;top:323px;color:#000;font-size:12px;line-height:14px;letter-spacing:-0.3px">日MACD周KD.KD(日线)</div>
<div class="a nw" style="left:1008px;top:323px;color:#000;font-size:12px;line-height:14px;">证券相关序列</div>
<div class="a nw" style="left:1096px;top:323px;color:#000;font-size:12px;line-height:14px;">公式</div>
<div class="a nw" style="left:674px;top:339px;color:#000;font-size:12px;line-height:14px;">2</div>
<div class="a nw" style="left:695px;top:339px;color:#000;font-size:12px;line-height:14px;">日空</div>
<div class="a nw" style="left:786px;top:339px;color:#000;font-size:12px;line-height:14px;letter-spacing:-0.3px">日MACD周KD.KK(日线)</div>
<div class="a nw" style="left:1008px;top:339px;color:#000;font-size:12px;line-height:14px;">证券相关序列</div>
<div class="a nw" style="left:1096px;top:339px;color:#000;font-size:12px;line-height:14px;">公式</div>
<div class="a nw" style="left:674px;top:355px;color:#000;font-size:12px;line-height:14px;">3</div>
<div class="a nw" style="left:695px;top:355px;color:#000;font-size:12px;line-height:14px;">内多</div>
<div class="a nw" style="left:786px;top:355px;color:#000;font-size:12px;line-height:14px;letter-spacing:-0.3px">日内MACDKD.RKD(30分)</div>
<div class="a nw" style="left:1008px;top:355px;color:#000;font-size:12px;line-height:14px;">证券相关序列</div>
<div class="a nw" style="left:1096px;top:355px;color:#000;font-size:12px;line-height:14px;">公式</div>
<div class="a nw" style="left:674px;top:371px;color:#000;font-size:12px;line-height:14px;">4</div>
<div class="a nw" style="left:695px;top:371px;color:#000;font-size:12px;line-height:14px;">内空</div>
<div class="a nw" style="left:786px;top:371px;color:#000;font-size:12px;line-height:14px;letter-spacing:-0.3px">日内MACDKD.RKK(30分)</div>
<div class="a nw" style="left:1008px;top:371px;color:#000;font-size:12px;line-height:14px;">证券相关序列</div>
<div class="a nw" style="left:1096px;top:371px;color:#000;font-size:12px;line-height:14px;">公式</div>
<div class="a" style="left:669px;top:631px;width:473px;height:17px;background:#f0f0f0"></div><svg class="a" style="left:669px;top:631px" width="473" height="17"><path d="M10 5l-3.5 3.5 3.5 3.5" stroke="#606060" stroke-width="1.4" fill="none"/><path d="M463 5l3.5 3.5-3.5 3.5" stroke="#606060" stroke-width="1.4" fill="none"/><rect x="14" y="2" width="77" height="13" fill="#cdcdcd"/></svg>
<div class="a" style="left:1158px;top:306px;width:13px;height:13px;background:#fff;border:1px solid #333"></div><svg class="a" style="left:1158px;top:306px" width="13" height="13"><path d="M2.5 6.5l3 3 5-6" stroke="#000" stroke-width="1.4" fill="none"/></svg>
<div class="a nw" style="left:1174px;top:306px;color:#000;font-size:12px;line-height:14px;">自动更新(U)</div>
<div class="a" style="left:1158px;top:327px;width:13px;height:13px;background:#fff;border:1px solid #333"></div>
<div class="a nw" style="left:1174px;top:327px;color:#000;font-size:12px;line-height:14px;">拖动排序(R)</div>
<div class="a nw" style="left:1153px;top:369px;width:94px;height:19px;background:#e1e1e1;border:1px solid #adadad;font-size:12px;line-height:17px;text-align:center;color:#000">属性(P)...</div>
<div class="a nw" style="left:1153px;top:397px;width:94px;height:19px;background:#e1e1e1;border:1px solid #adadad;font-size:12px;line-height:17px;text-align:center;color:#000">新建(N)...</div>
<div class="a nw" style="left:1153px;top:424px;width:94px;height:19px;background:#e1e1e1;border:1px solid #adadad;font-size:12px;line-height:17px;text-align:center;color:#000">删除(D)...</div>
<div class="a nw" style="left:667px;top:654px;width:60px;height:19px;background:#e1e1e1;border:1px solid #adadad;font-size:12px;line-height:17px;text-align:center;color:#000">刷新所有</div>
<div class="a nw" style="left:673px;top:680px;color:#000;font-size:13px;line-height:14px;line-height:13px">提醒:该</div>
<div class="a nw" style="left:673px;top:693px;color:#000;font-size:13px;line-height:14px;line-height:13px">据的公式</div>
<div class="a nw" style="left:701px;top:711px;color:#000;font-size:11px;line-height:14px;">2</div>
<div class="a nw" style="left:677px;top:722px;color:#000;font-size:13px;line-height:14px;">的精度</div>
<div class="a" style="left:704px;top:453px;width:722px;height:458px;background:#f0f0f0;border:1px solid #8a8a8a;box-shadow:0 0 8px rgba(0,0,0,.45)"></div>
<div class="a" style="left:705px;top:454px;width:720px;height:26px;background:#fff"></div>
<div class="a nw" style="left:709px;top:459px;color:#000;font-size:13px;line-height:14px;">自定义数据属性设置</div>
<svg class="a" style="left:1404px;top:460px" width="12" height="12"><path d="M1 1l10 10M11 1l-10 10" stroke="#000" stroke-width="1.1"/></svg>
<div class="a nw" style="left:716px;top:489px;color:#000;font-size:12px;line-height:14px;">公式组(G):</div>
<div class="a nw" style="left:907px;top:489px;color:#000;font-size:12px;line-height:14px;">公式列表(L):</div>
<div class="a" style="left:715px;top:505px;width:186px;height:222px;background:#fff;border:1px solid #828790"></div>
<svg class="a" style="left:716px;top:506px" width="170" height="203"><path d="M13.5 16v190M32.5 17v190" stroke="#909090" stroke-dasharray="1 1"/><path d="M14 10.5h10" stroke="#909090" stroke-dasharray="1 1"/><path d="M33 28.5h10" stroke="#909090" stroke-dasharray="1 1"/><path d="M33 46.5h10" stroke="#909090" stroke-dasharray="1 1"/><path d="M33 64.5h10" stroke="#909090" stroke-dasharray="1 1"/><path d="M33 82.5h10" stroke="#909090" stroke-dasharray="1 1"/><path d="M33 100.5h10" stroke="#909090" stroke-dasharray="1 1"/><path d="M33 118.5h10" stroke="#909090" stroke-dasharray="1 1"/><path d="M33 136.5h10" stroke="#909090" stroke-dasharray="1 1"/><path d="M33 154.5h10" stroke="#909090" stroke-dasharray="1 1"/><path d="M33 172.5h10" stroke="#909090" stroke-dasharray="1 1"/><path d="M33 190.5h10" stroke="#909090" stroke-dasharray="1 1"/><rect x="9.5" y="6.5" width="8" height="8" fill="#fff" stroke="#8ca0b8"/><path d="M11 10.5h5" stroke="#2040a0"/><rect x="28.5" y="60.5" width="8" height="8" fill="#fff" stroke="#8ca0b8"/><path d="M30 64.5h5M32.5 62v5" stroke="#2040a0"/><rect x="28.5" y="114.5" width="8" height="8" fill="#fff" stroke="#8ca0b8"/><path d="M30 118.5h5M32.5 116v5" stroke="#2040a0"/></svg>
<svg class="a" style="left:741px;top:509px" width="16" height="14"><path d="M1.5 3.5h5l1 1.5h7v8h-13z" fill="#e8e070" stroke="#333"/><path d="M1.5 5.5h13" stroke="#333"/></svg>
<div class="a nw" style="left:761px;top:509px;color:#000;font-size:13px;line-height:14px;">交易系统</div>
<div class="a" style="left:778px;top:526px;width:10px;height:17px;background:#e8e8e8"></div>
<svg class="a" style="left:760px;top:527px" width="16" height="14"><path d="M1.5 3.5h5l1 1.5h7v8h-13z" fill="#e8e070" stroke="#333"/><path d="M1.5 5.5h13" stroke="#333"/></svg>
<div class="a nw" style="left:780px;top:527px;color:#000;font-size:12px;line-height:14px;letter-spacing:-0.2px;max-width:104px;overflow:hidden">1</div>
<svg class="a" style="left:760px;top:545px" width="16" height="14"><path d="M1.5 3.5h5l1 1.5h7v8h-13z" fill="#e8e070" stroke="#333"/><path d="M1.5 5.5h13" stroke="#333"/></svg>
<div class="a nw" style="left:780px;top:545px;color:#000;font-size:12px;line-height:14px;letter-spacing:-0.2px;max-width:104px;overflow:hidden">10</div>
<svg class="a" style="left:760px;top:563px" width="16" height="14"><path d="M1.5 3.5h5l1 1.5h7v8h-13z" fill="#e8e070" stroke="#333"/><path d="M1.5 5.5h13" stroke="#333"/></svg>
<div class="a nw" style="left:780px;top:563px;color:#000;font-size:12px;line-height:14px;letter-spacing:-0.2px;max-width:104px;overflow:hidden">A.图表交易系统</div>
<svg class="a" style="left:760px;top:581px" width="16" height="14"><path d="M1.5 3.5h5l1 1.5h7v8h-13z" fill="#e8e070" stroke="#333"/><path d="M1.5 5.5h13" stroke="#333"/></svg>
<div class="a nw" style="left:780px;top:581px;color:#000;font-size:12px;line-height:14px;letter-spacing:-0.2px;max-width:104px;overflow:hidden">B.后台交易系统</div>
<svg class="a" style="left:760px;top:599px" width="16" height="14"><path d="M1.5 3.5h5l1 1.5h7v8h-13z" fill="#e8e070" stroke="#333"/><path d="M1.5 5.5h13" stroke="#333"/></svg>
<div class="a nw" style="left:780px;top:599px;color:#000;font-size:12px;line-height:14px;letter-spacing:-0.2px;max-width:104px;overflow:hidden">C.套利交易系统范例</div>
<svg class="a" style="left:760px;top:617px" width="16" height="14"><path d="M1.5 3.5h5l1 1.5h7v8h-13z" fill="#e8e070" stroke="#333"/><path d="M1.5 5.5h13" stroke="#333"/></svg>
<div class="a nw" style="left:780px;top:617px;color:#000;font-size:12px;line-height:14px;letter-spacing:-0.2px;max-width:104px;overflow:hidden">D.功能模块范例</div>
<svg class="a" style="left:760px;top:635px" width="16" height="14"><path d="M1.5 3.5h5l1 1.5h7v8h-13z" fill="#e8e070" stroke="#333"/><path d="M1.5 5.5h13" stroke="#333"/></svg>
<div class="a nw" style="left:780px;top:635px;color:#000;font-size:12px;line-height:14px;letter-spacing:-0.2px;max-width:104px;overflow:hidden">E.专用特色指标</div>
<svg class="a" style="left:760px;top:653px" width="16" height="14"><path d="M1.5 3.5h5l1 1.5h7v8h-13z" fill="#e8e070" stroke="#333"/><path d="M1.5 5.5h13" stroke="#333"/></svg>
<div class="a nw" style="left:780px;top:653px;color:#000;font-size:12px;line-height:14px;letter-spacing:-0.2px;max-width:104px;overflow:hidden">F.gsf期权组合</div>
<svg class="a" style="left:760px;top:671px" width="16" height="14"><path d="M1.5 3.5h5l1 1.5h7v8h-13z" fill="#e8e070" stroke="#333"/><path d="M1.5 5.5h13" stroke="#333"/></svg>
<div class="a nw" style="left:780px;top:671px;color:#000;font-size:12px;line-height:14px;letter-spacing:-0.2px;max-width:104px;overflow:hidden">G.期权模块范例</div>
<svg class="a" style="left:760px;top:689px" width="16" height="14"><path d="M1.5 3.5h5l1 1.5h7v8h-13z" fill="#e8e070" stroke="#333"/><path d="M1.5 5.5h13" stroke="#333"/></svg>
<div class="a nw" style="left:780px;top:689px;color:#000;font-size:12px;line-height:14px;letter-spacing:-0.2px;max-width:104px;overflow:hidden">H.股票模块范例</div>
<div class="a" style="left:884px;top:506px;width:17px;height:203px;background:#f0f0f0"></div><svg class="a" style="left:884px;top:506px" width="17" height="203"><path d="M5 10l3.5-3.5 3.5 3.5" stroke="#606060" stroke-width="1.4" fill="none"/><path d="M5 193l3.5 3.5 3.5-3.5" stroke="#606060" stroke-width="1.4" fill="none"/><rect x="2" y="39" width="13" height="115" fill="#cdcdcd"/></svg>
<div class="a" style="left:716px;top:709px;width:168px;height:17px;background:#f0f0f0"></div><svg class="a" style="left:716px;top:709px" width="168" height="17"><path d="M10 5l-3.5 3.5 3.5 3.5" stroke="#606060" stroke-width="1.4" fill="none"/><path d="M158 5l3.5 3.5-3.5 3.5" stroke="#606060" stroke-width="1.4" fill="none"/><rect x="19" y="2" width="124" height="13" fill="#cdcdcd"/></svg>
<div class="a" style="left:884px;top:709px;width:16px;height:17px;background:#f0f0f0"></div>
<div class="a" style="left:908px;top:505px;width:261px;height:222px;background:#fff;border:1px solid #828790"></div>
<div class="a" style="left:909px;top:529px;width:241px;height:1px;background:#e5e5e5"></div>
<div class="a" style="left:1075px;top:510px;width:1px;height:19px;background:#e5e5e5"></div>
<div class="a" style="left:1135px;top:510px;width:1px;height:19px;background:#e5e5e5"></div>
<div class="a nw" style="left:916px;top:512px;color:#000;font-size:12px;line-height:14px;">名称</div>
<div class="a nw" style="left:1058px;top:512px;color:#aaa;font-size:10px;line-height:14px;">/</div>
<div class="a nw" style="left:1080px;top:512px;color:#000;font-size:12px;line-height:14px;">类型</div>
<div class="a nw" style="left:1139px;top:512px;color:#000;font-size:12px;line-height:14px;width:10px;overflow:hidden">设</div>
<div class="a" style="left:931px;top:600px;width:218px;height:17px;background:#f0f0f0"></div>
<svg class="a" style="left:915px;top:533px" width="15" height="15"><path d="M2.5 14.5h11v-2h-9l3-4-3-4h9v-2h-11z" fill="none" stroke="#222" stroke-width="1"/><path d="M6 3.5h3M8 6.5h4" stroke="#222"/><path d="M4 12.5h9" stroke="#c02020"/><path d="M4 14.5h9" stroke="#2020c0"/></svg>
<div class="a nw" style="left:932px;top:533px;color:#1010ff;font-size:12px;line-height:14px;letter-spacing:-0.2px">后台下单模板</div>
<div class="a nw" style="left:1080px;top:533px;color:#1010ff;font-size:12px;line-height:14px;">交易系统</div>
<svg class="a" style="left:915px;top:550px" width="15" height="15"><path d="M2.5 14.5h11v-2h-9l3-4-3-4h9v-2h-11z" fill="none" stroke="#222" stroke-width="1"/><path d="M6 3.5h3M8 6.5h4" stroke="#222"/><path d="M4 12.5h9" stroke="#c02020"/><path d="M4 14.5h9" stroke="#2020c0"/></svg>
<div class="a nw" style="left:932px;top:550px;color:#1010ff;font-size:12px;line-height:14px;letter-spacing:-0.2px">计算盈亏</div>
<div class="a nw" style="left:1080px;top:550px;color:#1010ff;font-size:12px;line-height:14px;">交易系统</div>
<svg class="a" style="left:915px;top:567px" width="15" height="15"><path d="M2.5 14.5h11v-2h-9l3-4-3-4h9v-2h-11z" fill="none" stroke="#222" stroke-width="1"/><path d="M6 3.5h3M8 6.5h4" stroke="#222"/><path d="M4 12.5h9" stroke="#c02020"/><path d="M4 14.5h9" stroke="#2020c0"/></svg>
<div class="a nw" style="left:932px;top:567px;color:#1010ff;font-size:12px;line-height:14px;letter-spacing:-0.2px">计算最大回撤</div>
<div class="a nw" style="left:1080px;top:567px;color:#1010ff;font-size:12px;line-height:14px;">交易系统</div>
<svg class="a" style="left:915px;top:584px" width="15" height="15"><path d="M2.5 14.5h11v-2h-9l3-4-3-4h9v-2h-11z" fill="none" stroke="#222" stroke-width="1"/><path d="M6 3.5h3M8 6.5h4" stroke="#222"/><path d="M4 12.5h9" stroke="#c02020"/><path d="M4 14.5h9" stroke="#2020c0"/></svg>
<div class="a nw" style="left:932px;top:584px;color:#1010ff;font-size:12px;line-height:14px;letter-spacing:-0.2px">龙抬头</div>
<div class="a nw" style="left:1080px;top:584px;color:#1010ff;font-size:12px;line-height:14px;">交易系统</div>
<svg class="a" style="left:915px;top:601px" width="15" height="15"><path d="M2.5 14.5h11v-2h-9l3-4-3-4h9v-2h-11z" fill="none" stroke="#222" stroke-width="1"/><path d="M6 3.5h3M8 6.5h4" stroke="#222"/><path d="M4 12.5h9" stroke="#c02020"/><path d="M4 14.5h9" stroke="#2020c0"/></svg>
<div class="a nw" style="left:932px;top:601px;color:#000;font-size:12px;line-height:14px;letter-spacing:-0.2px">日MACD周KD</div>
<div class="a nw" style="left:1080px;top:601px;color:#000;font-size:12px;line-height:14px;">交易系统</div>
<svg class="a" style="left:915px;top:618px" width="15" height="15"><path d="M2.5 14.5h11v-2h-9l3-4-3-4h9v-2h-11z" fill="none" stroke="#222" stroke-width="1"/><path d="M6 3.5h3M8 6.5h4" stroke="#222"/><path d="M4 12.5h9" stroke="#c02020"/><path d="M4 14.5h9" stroke="#2020c0"/></svg>
<div class="a nw" style="left:932px;top:618px;color:#1010ff;font-size:12px;line-height:14px;letter-spacing:-0.2px">日内MACDKD</div>
<div class="a nw" style="left:1080px;top:618px;color:#1010ff;font-size:12px;line-height:14px;">交易系统</div>
<svg class="a" style="left:915px;top:635px" width="15" height="15"><path d="M2.5 14.5h11v-2h-9l3-4-3-4h9v-2h-11z" fill="none" stroke="#222" stroke-width="1"/><path d="M6 3.5h3M8 6.5h4" stroke="#222"/><path d="M4 12.5h9" stroke="#c02020"/><path d="M4 14.5h9" stroke="#2020c0"/></svg>
<div class="a nw" style="left:932px;top:635px;color:#1010ff;font-size:12px;line-height:14px;letter-spacing:-0.2px">提前N秒下单</div>
<div class="a nw" style="left:1080px;top:635px;color:#1010ff;font-size:12px;line-height:14px;">交易系统</div>
<svg class="a" style="left:915px;top:652px" width="15" height="15"><path d="M2.5 14.5h11v-2h-9l3-4-3-4h9v-2h-11z" fill="none" stroke="#222" stroke-width="1"/><path d="M6 3.5h3M8 6.5h4" stroke="#222"/><path d="M4 12.5h9" stroke="#c02020"/><path d="M4 14.5h9" stroke="#2020c0"/></svg>
<div class="a nw" style="left:932px;top:652px;color:#1010ff;font-size:12px;line-height:14px;letter-spacing:-0.2px">突破模型信号</div>
<div class="a nw" style="left:1080px;top:652px;color:#1010ff;font-size:12px;line-height:14px;">交易系统</div>
<svg class="a" style="left:915px;top:669px" width="15" height="15"><path d="M2.5 14.5h11v-2h-9l3-4-3-4h9v-2h-11z" fill="none" stroke="#222" stroke-width="1"/><path d="M6 3.5h3M8 6.5h4" stroke="#222"/><path d="M4 12.5h9" stroke="#c02020"/><path d="M4 14.5h9" stroke="#2020c0"/></svg>
<div class="a nw" style="left:932px;top:669px;color:#1010ff;font-size:12px;line-height:14px;letter-spacing:-0.2px">信号也会消失</div>
<div class="a nw" style="left:1080px;top:669px;color:#1010ff;font-size:12px;line-height:14px;">交易系统</div>
<svg class="a" style="left:915px;top:686px" width="15" height="15"><path d="M2.5 14.5h11v-2h-9l3-4-3-4h9v-2h-11z" fill="none" stroke="#222" stroke-width="1"/><path d="M6 3.5h3M8 6.5h4" stroke="#222"/><path d="M4 12.5h9" stroke="#c02020"/><path d="M4 14.5h9" stroke="#2020c0"/></svg>
<div class="a nw" style="left:932px;top:686px;color:#1010ff;font-size:12px;line-height:14px;letter-spacing:-0.2px">移动止盈损</div>
<div class="a nw" style="left:1080px;top:686px;color:#1010ff;font-size:12px;line-height:14px;">交易系统</div>
<div class="a" style="left:1150px;top:506px;width:17px;height:203px;background:#f0f0f0"></div><svg class="a" style="left:1150px;top:506px" width="17" height="203"><path d="M5 10l3.5-3.5 3.5 3.5" stroke="#606060" stroke-width="1.4" fill="none"/><path d="M5 193l3.5 3.5 3.5-3.5" stroke="#606060" stroke-width="1.4" fill="none"/><rect x="2" y="87" width="13" height="97" fill="#cdcdcd"/></svg>
<div class="a" style="left:909px;top:709px;width:241px;height:17px;background:#f0f0f0"></div><svg class="a" style="left:909px;top:709px" width="241" height="17"><path d="M10 5l-3.5 3.5 3.5 3.5" stroke="#606060" stroke-width="1.4" fill="none"/><path d="M231 5l3.5 3.5-3.5 3.5" stroke="#606060" stroke-width="1.4" fill="none"/><rect x="19" y="2" width="76" height="13" fill="#cdcdcd"/></svg>
<div class="a" style="left:1150px;top:709px;width:18px;height:17px;background:#f0f0f0"></div>
<div class="a nw" style="left:1170px;top:493px;color:#000;font-size:12px;line-height:14px;">数据名称(C):</div>
<div class="a" style="left:1244px;top:490px;width:171px;height:21px;background:#fff;border:1px solid #0078d7"></div>
<div class="a" style="left:1247px;top:493px;width:26px;height:15px;background:#0078d7"></div>
<div class="a nw" style="left:1248px;top:494px;color:#fff;font-size:12px;line-height:14px;">日多</div>
<div class="a" style="left:1176px;top:515px;width:240px;height:165px;background:#f0f0f0;border:1px solid #828790"></div>
<div class="a nw" style="left:1178px;top:519px;color:#000;font-size:14px;line-height:14px;line-height:16px">本指标无参数需要设置</div>
<svg class="a" style="left:1397px;top:517px" width="17" height="161"><path d="M5 10l3.5-3.5 3.5 3.5" stroke="#b0b0b0" stroke-width="1.2" fill="none"/><path d="M5 151l3.5 3.5 3.5-3.5" stroke="#b0b0b0" stroke-width="1.2" fill="none"/><line x1="0.5" y1="0" x2="0.5" y2="161" stroke="#e0e0e0"/></svg>
<div class="a nw" style="left:1180px;top:689px;color:#000;font-size:12px;line-height:14px;width:70px;text-align:right">分析周期(Y):</div>
<div class="a nw" style="left:1259px;top:686px;width:91px;height:20px;background:#e1e1e1;border:1px solid #adadad;font-size:12px;line-height:18px;color:#000;padding-left:3px;overflow:hidden">日线</div><svg class="a" style="left:1335px;top:693px" width="10" height="6"><path d="M1 1l4 4 4-4" stroke="#333" fill="none"/></svg>
<div class="a nw" style="left:1180px;top:710px;color:#000;font-size:12px;line-height:14px;width:70px;text-align:right">指标线(Z):</div>
<div class="a nw" style="left:1259px;top:707px;width:158px;height:21px;background:#e1e1e1;border:1px solid #adadad;font-size:12px;line-height:19px;color:#000;padding-left:3px;overflow:hidden">KD</div><svg class="a" style="left:1402px;top:714px" width="10" height="6"><path d="M1 1l4 4 4-4" stroke="#333" fill="none"/></svg>
<div class="a nw" style="left:1140px;top:734px;color:#000;font-size:12px;line-height:14px;width:112px;text-align:right">无有效数据时(D):</div>
<div class="a nw" style="left:1259px;top:732px;width:104px;height:20px;background:#e1e1e1;border:1px solid #adadad;font-size:12px;line-height:18px;color:#000;padding-left:3px;overflow:hidden">不统计</div><svg class="a" style="left:1348px;top:739px" width="10" height="6"><path d="M1 1l4 4 4-4" stroke="#333" fill="none"/></svg>
<div class="a" style="left:1365px;top:732px;width:51px;height:20px;background:#f0f0f0;border:1px solid #d0d0d0"></div>
<div class="a nw" style="left:1368px;top:735px;color:#999;font-size:12px;line-height:14px;">0</div>
<div class="a nw" style="left:1140px;top:778px;color:#000;font-size:12px;line-height:14px;width:112px;text-align:right">基准时间(T):</div>
<div class="a nw" style="left:1259px;top:775px;width:157px;height:20px;background:#cccccc;border:1px solid #cccccc;font-size:12px;line-height:18px;color:#838383;padding-left:3px;overflow:hidden">SH 上海证券交易所(SSE)</div><svg class="a" style="left:1401px;top:782px" width="10" height="6"><path d="M1 1l4 4 4-4" stroke="#a0a0a0" fill="none"/></svg>
<div class="a" style="left:716px;top:734px;width:13px;height:13px;background:#fff;border:1px solid #333"></div>
<div class="a nw" style="left:732px;top:734px;color:#000;font-size:12px;line-height:14px;">利用反转价格(R)</div>
<div class="a nw" style="left:900px;top:734px;color:#000;font-size:12px;line-height:14px;width:104px;text-align:right">坐标(B):</div>
<div class="a nw" style="left:1007px;top:731px;width:96px;height:20px;background:#e1e1e1;border:1px solid #adadad;font-size:12px;line-height:18px;color:#000;padding-left:3px;overflow:hidden">交易日</div><svg class="a" style="left:1088px;top:738px" width="10" height="6"><path d="M1 1l4 4 4-4" stroke="#333" fill="none"/></svg>
<div class="a" style="left:716px;top:758px;width:13px;height:13px;background:#fff;border:1px solid #333"></div><svg class="a" style="left:716px;top:758px" width="13" height="13"><path d="M2.5 6.5l3 3 5-6" stroke="#000" stroke-width="1.4" fill="none"/></svg>
<div class="a nw" style="left:732px;top:758px;color:#000;font-size:12px;line-height:14px;">复权数据(W)</div>
<div class="a" style="left:809px;top:758px;width:13px;height:13px;background:#fff;border:1px solid #333"></div>
<div class="a nw" style="left:824px;top:758px;color:#000;font-size:12px;line-height:14px;">生成横向排名数据(从大到小)(O)</div>
<div class="a nw" style="left:1007px;top:755px;width:109px;height:20px;background:#cccccc;border:1px solid #cccccc;font-size:12px;line-height:18px;color:#838383;padding-left:3px;overflow:hidden">0-N自然排序</div><svg class="a" style="left:1101px;top:762px" width="10" height="6"><path d="M1 1l4 4 4-4" stroke="#a0a0a0" fill="none"/></svg>
<div class="a nw" style="left:716px;top:784px;color:#000;font-size:12px;line-height:14px;">计算范围(可选择多个市场分类及板块)</div>
<div class="a" style="left:716px;top:800px;width:364px;height:21px;background:#f0f0f0;border:1px solid #a0a0a0"></div>
<div class="a nw" style="left:719px;top:804px;color:#000;font-size:12px;line-height:14px;">自选股</div>
<div class="a nw" style="left:1088px;top:801px;width:109px;height:19px;background:#e1e1e1;border:1px solid #adadad;font-size:12px;line-height:17px;text-align:center;color:#000">设置范围(E)...</div>
<div class="a nw" style="left:1341px;top:801px;width:73px;height:19px;background:#e1e1e1;border:2px solid #0078d7;font-size:12px;line-height:15px;text-align:center;color:#000">确定</div>
<div class="a" style="left:708px;top:835px;width:707px;height:1px;background:#d8d8d8"></div>
<div class="a" style="left:707px;top:827px;width:50px;height:14px;background:#f0f0f0"></div>
<div class="a nw" style="left:708px;top:828px;color:#000;font-size:12px;line-height:14px;">刷新选项</div>
<svg class="a" style="left:720px;top:854px" width="13" height="13"><circle cx="6.5" cy="6.5" r="6" fill="#fff" stroke="#333"/><circle cx="6.5" cy="6.5" r="3" fill="#222"/></svg>
<div class="a" style="left:743px;top:851px;width:37px;height:21px;background:#fff;border:1px solid #7a7a7a"></div>
<div class="a nw" style="left:746px;top:855px;color:#000;font-size:12px;line-height:14px;">30</div>
<div class="a nw" style="left:784px;top:853px;color:#000;font-size:12px;line-height:14px;">秒自动循环刷新(0表示不刷新)</div>
<div class="a" style="left:953px;top:854px;width:13px;height:13px;background:#fff;border:1px solid #333"></div>
<div class="a nw" style="left:969px;top:853px;color:#000;font-size:12px;line-height:14px;">刷新时段限制</div>
<div class="a" style="left:1044px;top:850px;width:77px;height:23px;background:#fff;border:1px solid #7a7a7a"></div><div class="a nw" style="left:1050px;top:855px;color:#999;font-size:12px;line-height:14px;letter-spacing:0.8px">8:00:00</div><svg class="a" style="left:1102px;top:852px" width="16" height="19"><rect x="0" y="0" width="15" height="19" fill="#f0f0f0"/><path d="M4 7l3.5-3 3.5 3z M4 12l3.5 3 3.5-3z" fill="#606060"/></svg>
<div class="a nw" style="left:1127px;top:853px;color:#000;font-size:12px;line-height:14px;">至</div>
<div class="a" style="left:1145px;top:850px;width:77px;height:23px;background:#fff;border:1px solid #7a7a7a"></div><div class="a nw" style="left:1151px;top:855px;color:#999;font-size:12px;line-height:14px;letter-spacing:0.8px">8:00:00</div><svg class="a" style="left:1203px;top:852px" width="16" height="19"><rect x="0" y="0" width="15" height="19" fill="#f0f0f0"/><path d="M4 7l3.5-3 3.5 3z M4 12l3.5 3 3.5-3z" fill="#606060"/></svg>
<svg class="a" style="left:1224px;top:854px" width="13" height="13"><circle cx="6.5" cy="6.5" r="6" fill="#fff" stroke="#333"/></svg>
<div class="a nw" style="left:1240px;top:853px;color:#000;font-size:12px;line-height:14px;">指定时间</div>
<div class="a" style="left:1292px;top:850px;width:78px;height:23px;background:#fff;border:1px solid #7a7a7a"></div><div class="a nw" style="left:1298px;top:855px;color:#999;font-size:12px;line-height:14px;letter-spacing:0.8px">8:00:00</div><svg class="a" style="left:1351px;top:852px" width="16" height="19"><rect x="0" y="0" width="15" height="19" fill="#f0f0f0"/><path d="M4 7l3.5-3 3.5 3z M4 12l3.5 3 3.5-3z" fill="#606060"/></svg>
<div class="a nw" style="left:1373px;top:853px;color:#000;font-size:12px;line-height:14px;">刷新一次</div>
<svg class="a" style="left:720px;top:882px" width="13" height="13"><circle cx="6.5" cy="6.5" r="6" fill="#fff" stroke="#333"/></svg>
<div class="a nw" style="left:735px;top:881px;color:#000;font-size:12px;line-height:14px;">刷新"选项->维护中配置的默认数量</div>
<svg class="a" style="left:930px;top:882px" width="13" height="13"><circle cx="6.5" cy="6.5" r="6" fill="#fff" stroke="#333"/><circle cx="6.5" cy="6.5" r="3" fill="#222"/></svg>
<div class="a nw" style="left:946px;top:881px;color:#000;font-size:12px;line-height:14px;">刷新指定数量</div>
<div class="a" style="left:1029px;top:878px;width:51px;height:21px;background:#fff;border:1px solid #7a7a7a"></div>
<div class="a nw" style="left:1032px;top:882px;color:#000;font-size:12px;line-height:14px;">560</div>
<div class="a nw" style="left:1085px;top:881px;color:#000;font-size:12px;line-height:14px;">的数据</div>
<div class="a" style="left:1153px;top:881px;width:13px;height:13px;background:#fff;border:1px solid #333"></div>
<div class="a nw" style="left:1168px;top:881px;color:#000;font-size:12px;line-height:14px;">仅刷当日数据(提速)</div>
<div class="a" style="left:1287px;top:881px;width:13px;height:13px;background:#fff;border:1px solid #333"></div>
<div class="a nw" style="left:1302px;top:881px;color:#000;font-size:12px;line-height:14px;">刷新前清空原先数据</div>
<svg class="a" style="left:690px;top:825px" width="140" height="75"><ellipse cx="65.5" cy="37" rx="57" ry="26.5" fill="none" stroke="#1ed2d6" stroke-width="6.5"/><ellipse cx="68" cy="38" rx="50" ry="19" fill="none" stroke="#1ed2d6" stroke-width="0.8" opacity=".7"/></svg>
<svg class="a" style="left:0;top:0" width="587" height="984" font-family="Liberation Mono" font-size="12" letter-spacing="-0.6">
<rect x="17" y="767" width="569" height="217" fill="#000"/>
<line x1="17" y1="767.5" x2="586" y2="767.5" stroke="#e00000"/>
<line x1="17.5" y1="767" x2="17.5" y2="984" stroke="#e00000"/>
<rect x="59.5" y="768.5" width="486" height="16" fill="#000" stroke="#e00000"/>
<line x1="59.5" y1="791.5" x2="545" y2="791.5" stroke="#e00000"/>
<line x1="113.5" y1="769" x2="113.5" y2="784" stroke="#e00000"/>
<line x1="128.5" y1="769" x2="128.5" y2="784" stroke="#e00000"/>
<line x1="143.5" y1="769" x2="143.5" y2="784" stroke="#e00000"/>
<line x1="170.5" y1="769" x2="170.5" y2="784" stroke="#e00000"/>
<line x1="203.5" y1="769" x2="203.5" y2="784" stroke="#e00000"/>
<line x1="233.5" y1="769" x2="233.5" y2="784" stroke="#e00000"/>
<line x1="263.5" y1="769" x2="263.5" y2="784" stroke="#e00000"/>
<line x1="305.5" y1="769" x2="305.5" y2="784" stroke="#e00000"/>
<line x1="324.5" y1="769" x2="324.5" y2="784" stroke="#e00000"/>
<line x1="355.5" y1="769" x2="355.5" y2="784" stroke="#e00000"/>
<line x1="377.5" y1="769" x2="377.5" y2="784" stroke="#e00000"/>
<line x1="403.5" y1="769" x2="403.5" y2="784" stroke="#e00000"/>
<line x1="468.5" y1="769" x2="468.5" y2="784" stroke="#e00000"/>
<line x1="523.5" y1="769" x2="523.5" y2="784" stroke="#e00000"/>
<line x1="528.5" y1="769" x2="528.5" y2="784" stroke="#e00000"/>
<rect x="171" y="769" width="32" height="15" fill="#000080"/><rect x="204" y="769" width="29" height="15" fill="#000080"/>
<path d="M118 776.5l7 -4.5v9z" fill="#ddd"/><path d="M132 772v9l7-4.5z" fill="#ddd"/>
<circle cx="517" cy="776.5" r="5" fill="#aaa"/><circle cx="517" cy="776.5" r="2" fill="#000"/>
<path d="M549 771l3 5 3-5M552 772v8M548 778q4 4 8 0" stroke="#ff2020" stroke-width="2" fill="none"/>
<text x="57" y="797.1" fill="#ff2020" text-anchor="end">2065</text>
<text x="586" y="797.1" fill="#ff2020" text-anchor="end">1.23%</text>
<line x1="60" y1="793.5" x2="545" y2="793.5" stroke="#a00000" stroke-dasharray="1 4"/>
<text x="57" y="827.1" fill="#ff2020" text-anchor="end">2057</text>
<text x="586" y="827.1" fill="#ff2020" text-anchor="end">0.82%</text>
<line x1="60" y1="823.5" x2="545" y2="823.5" stroke="#a00000" stroke-dasharray="1 4"/>
<text x="57" y="858.1" fill="#ff2020" text-anchor="end">2048</text>
<text x="586" y="858.1" fill="#ff2020" text-anchor="end">0.41%</text>
<line x1="60" y1="854.5" x2="545" y2="854.5" stroke="#a00000" stroke-dasharray="1 4"/>
<text x="57" y="887.7" fill="#e0e0e0" text-anchor="end">2040</text>
<text x="586" y="887.7" fill="#e0e0e0" text-anchor="end">0.00%</text>
<line x1="60" y1="883.5" x2="545" y2="883.5" stroke="#a00000" stroke-dasharray="1 4"/>
<text x="57" y="919.2" fill="#00ff00" text-anchor="end">2032</text>
<text x="586" y="919.2" fill="#00ff00" text-anchor="end">0.41%</text>
<line x1="60" y1="915.5" x2="545" y2="915.5" stroke="#a00000" stroke-dasharray="1 4"/>
<text x="57" y="949.0" fill="#00ff00" text-anchor="end">2023</text>
<text x="586" y="949.0" fill="#00ff00" text-anchor="end">0.82%</text>
<line x1="60" y1="944.5" x2="545" y2="944.5" stroke="#a00000" stroke-dasharray="1 4"/>
<text x="57" y="978.9" fill="#00ff00" text-anchor="end">2015</text>
<text x="586" y="978.9" fill="#00ff00" text-anchor="end">1.23%</text>
<line x1="60" y1="974.5" x2="545" y2="974.5" stroke="#a00000" stroke-dasharray="1 4"/>
<line x1="59.5" y1="791" x2="59.5" y2="984" stroke="#e00000"/>
<line x1="545.5" y1="791" x2="545.5" y2="984" stroke="#e00000"/>
<line x1="142.5" y1="791" x2="142.5" y2="984" stroke="#e00000"/>
<line x1="226.5" y1="791" x2="226.5" y2="984" stroke="#e00000"/>
<line x1="278.5" y1="791" x2="278.5" y2="984" stroke="#e00000"/>
<line x1="331.5" y1="791" x2="331.5" y2="984" stroke="#e00000"/>
<line x1="373.5" y1="791" x2="373.5" y2="984" stroke="#e00000"/>
<line x1="415.5" y1="791" x2="415.5" y2="984" stroke="#e00000"/>
<line x1="478.5" y1="791" x2="478.5" y2="984" stroke="#e00000"/>
<line x1="100.5" y1="792" x2="100.5" y2="980" stroke="#a00000" stroke-dasharray="1 4"/>
<line x1="184.5" y1="792" x2="184.5" y2="980" stroke="#a00000" stroke-dasharray="1 4"/>
<line x1="252.5" y1="792" x2="252.5" y2="980" stroke="#a00000" stroke-dasharray="1 4"/>
<line x1="304.5" y1="792" x2="304.5" y2="980" stroke="#a00000" stroke-dasharray="1 4"/>
<line x1="352.5" y1="792" x2="352.5" y2="980" stroke="#a00000" stroke-dasharray="1 4"/>
<line x1="394.5" y1="792" x2="394.5" y2="980" stroke="#a00000" stroke-dasharray="1 4"/>
<line x1="446.5" y1="792" x2="446.5" y2="980" stroke="#a00000" stroke-dasharray="1 4"/>
<line x1="509.5" y1="792" x2="509.5" y2="980" stroke="#a00000" stroke-dasharray="1 4"/>
<path d="M61.5 882v-11M62.5 882v-36M63.5 882v-36M64.5 882v-3M65.5 882v-4M66.5 882v-2M67.5 882v-3M68.5 882v-6M69.5 882v-17M70.5 882v-5M72.5 882v-7M73.5 882v-8M74.5 882v-9M75.5 882v-24M76.5 882v-8M77.5 882v-10M78.5 882v-8M79.5 882v-3M80.5 882v-7M81.5 882v-17M82.5 882v-5M83.5 882v-20M84.5 882v-28M86.5 882v-4M88.5 882v-20M89.5 882v-11M90.5 882v-20M92.5 882v-5M94.5 882v-6M95.5 882v-17M96.5 882v-18M97.5 882v-12M99.5 882v-2M102.5 882v-8M108.5 882v-9M109.5 882v-7M110.5 882v-11M113.5 882v-3M114.5 882v-7M116.5 882v-9M118.5 882v-4M120.5 882v-6M193.5 882v-18M196.5 882v-13M197.5 882v-14M198.5 882v-11M200.5 882v-7M201.5 882v-7M203.5 882v-26M205.5 882v-4M206.5 882v-7M207.5 882v-10M210.5 882v-5M212.5 882v-2M213.5 882v-24M214.5 882v-15M215.5 882v-4M216.5 882v-15M220.5 882v-2M221.5 882v-11M222.5 882v-19M224.5 882v-4M230.5 882v-23M232.5 882v-2M235.5 882v-19M240.5 882v-9M241.5 882v-19M243.5 882v-19M246.5 882v-15M249.5 882v-24M250.5 882v-2M253.5 882v-11M254.5 882v-19M255.5 882v-6M256.5 882v-16M258.5 882v-22M262.5 882v-6M263.5 882v-2M266.5 882v-12M269.5 882v-5M270.5 882v-2M272.5 882v-9M273.5 882v-19M274.5 882v-20M275.5 882v-24M276.5 882v-14M278.5 882v-15M279.5 882v-3M283.5 882v-2M284.5 882v-16M285.5 882v-21M286.5 882v-7M288.5 882v-3M289.5 882v-22M292.5 882v-32M293.5 882v-32" stroke="#ff1010"/>
<path d="M62.5 884v8M64.5 884v12M69.5 884v2M70.5 884v19M71.5 884v7M72.5 884v3M74.5 884v9M76.5 884v16M79.5 884v21M80.5 884v19M82.5 884v33M84.5 884v2M85.5 884v9M88.5 884v2M89.5 884v9M92.5 884v19M95.5 884v18M96.5 884v4M97.5 884v21M99.5 884v11M100.5 884v12M102.5 884v6M103.5 884v4M104.5 884v10M108.5 884v2M110.5 884v3M111.5 884v23M112.5 884v8M113.5 884v8M115.5 884v7M116.5 884v2M118.5 884v9M122.5 884v13M123.5 884v4M125.5 884v2M126.5 884v5M127.5 884v9M130.5 884v8M132.5 884v14M133.5 884v5M136.5 884v2M140.5 884v3M141.5 884v3M142.5 884v11M143.5 884v2M145.5 884v28M146.5 884v9M147.5 884v2M148.5 884v9M149.5 884v8M152.5 884v2M155.5 884v14M160.5 884v14M161.5 884v28M164.5 884v11M168.5 884v19M169.5 884v20M176.5 884v5M178.5 884v7M182.5 884v12M183.5 884v5M184.5 884v17M185.5 884v2M187.5 884v3M189.5 884v17M199.5 884v5M201.5 884v6M203.5 884v8M207.5 884v3M211.5 884v5M214.5 884v4M219.5 884v6M220.5 884v25M222.5 884v26M223.5 884v4M228.5 884v10M229.5 884v7M230.5 884v12M232.5 884v5M234.5 884v7M237.5 884v15M239.5 884v7M247.5 884v9M263.5 884v6M269.5 884v2" stroke="#40f0f0"/>
<line x1="60" y1="882.5" x2="545" y2="882.5" stroke="#f0c0e0"/><line x1="60" y1="883.5" x2="545" y2="883.5" stroke="#ffffff" stroke-opacity=".6"/>
<line x1="60" y1="979.5" x2="545" y2="979.5" stroke="#b0c8e8"/><line x1="60" y1="982.5" x2="545" y2="982.5" stroke="#b0c8e8"/>
<text x="62" y="895" fill="#b00000" font-family="Liberation Sans" font-size="12" letter-spacing="0">均价 2040  量: 140</text>
<polyline fill="none" stroke="#ffffff" stroke-width="1" points="59.7,915.8 62.8,879.5 66.0,896.0 69.0,900.0 71.0,907.0 73.0,912.7 75.3,933.5 78.4,923.0 80.4,929.3 83.5,904.4 85.6,904.1 87.7,896.0 89.8,892.3 91.9,882.8 94.0,877.5 96.0,880.1 98.0,884.6 100.0,887.8 102.1,890.7 104.2,894.5 106.3,895.9 108.4,904.4 110.5,901.2 112.6,907.0 114.6,897.6 116.7,900.3 118.8,898.3 120.8,897.5 122.9,897.7 124.9,889.2 127.0,890.0 129.1,891.1 131.2,894.4 133.3,900.3 135.4,902.2 137.5,905.6 139.5,913.5 141.6,915.4 143.7,914.8 145.8,918.0 147.8,909.0 149.9,908.5 152.0,912.7 154.0,922.0 156.0,927.2 158.1,928.6 160.2,921.8 162.3,920.3 164.4,916.9 166.5,913.9 168.6,919.9 170.7,923.0 172.8,933.5 174.9,938.8 177.0,941.8 179.0,962.5 181.1,961.9 183.1,958.9 185.2,950.0 187.2,970.8 189.6,956.2 192.1,942.7 194.5,934.5 196.9,935.5 199.4,943.7 201.8,948.0 203.9,945.7 206.0,939.7 208.4,952.0 210.8,957.8 213.2,963.5 215.5,956.2 217.8,948.5 220.2,936.7 222.5,928.3 225.1,938.7 227.7,948.0 230.8,929.3 232.9,933.7 234.9,950.1 237.0,956.3 239.1,942.2 241.2,933.5 244.3,952.0 246.6,948.9 248.9,939.0 251.3,928.3 253.6,923.0 256.2,926.6 258.8,937.6 260.9,929.7 263.0,928.2 265.0,923.4 267.1,912.2 269.2,910.7 271.5,910.5 273.9,919.2 276.2,923.9 278.5,927.2 280.6,920.4 282.6,913.0 284.7,911.1 286.8,904.4 290.0,908.6 293.0,881.6"/>
<polyline fill="none" stroke="#ffff00" stroke-width="1.3" points="59.7,915.8 65.0,902.4 71.0,900.3 81.5,908.6 100.0,904.4 123.0,903.4 143.7,903.8 172.7,906.5 193.5,917.0 226.6,921.0 247.4,922.7 268.0,923.0 293.0,921.4"/>
</svg>
<div class="a nw" style="left:62px;top:769px;color:#fff;font-family:'Liberation Sans';font-size:12px;line-height:15px;letter-spacing:-0.3px">甲醇2101</div>
<div class="a nw" style="left:145px;top:769px;color:#ddd;font-family:'Liberation Sans';font-size:13px;line-height:15px;letter-spacing:0px">等权</div>
<div class="a nw" style="left:173px;top:769px;color:#3a7bff;font-family:'Liberation Sans';font-size:13px;line-height:15px;letter-spacing:0px">红绿</div>
<div class="a nw" style="left:205px;top:769px;color:#3a7bff;font-family:'Liberation Sans';font-size:13px;line-height:15px;letter-spacing:0px">均价</div>
<div class="a nw" style="left:236px;top:769px;color:#ddd;font-family:'Liberation Sans';font-size:13px;line-height:15px;letter-spacing:0px">量价</div>
<div class="a nw" style="left:266px;top:769px;color:#ddd;font-family:'Liberation Mono';font-size:11px;line-height:15px;letter-spacing:-0.9px">MINVOL</div>
<div class="a nw" style="left:307px;top:769px;color:#ddd;font-family:'Liberation Mono';font-size:11px;line-height:15px;letter-spacing:-0.9px">MA</div>
<div class="a nw" style="left:327px;top:769px;color:#ddd;font-family:'Liberation Mono';font-size:11px;line-height:15px;letter-spacing:-0.9px">MACD</div>
<div class="a nw" style="left:357px;top:769px;color:#ddd;font-family:'Liberation Mono';font-size:11px;line-height:15px;letter-spacing:-0.9px">KDJ</div>
<div class="a nw" style="left:380px;top:769px;color:#ddd;font-family:'Liberation Mono';font-size:11px;line-height:15px;letter-spacing:-0.9px">RSI</div>
<div class="a nw" style="left:405px;top:769px;color:#ddd;font-family:'Liberation Mono';font-size:11px;line-height:15px;letter-spacing:-0.9px">MACDKDWday</div>
<div class="a nw" style="left:471px;top:769px;color:#ddd;font-family:'Liberation Mono';font-size:11px;line-height:15px;letter-spacing:-0.9px">BOLL+MA</div>
<div class="a nw" style="left:530px;top:769px;color:#ddd;font-family:'Liberation Mono';font-size:11px;line-height:15px;letter-spacing:-0.9px">>></div>
<div class="a" style="left:0;top:0;width:1848px;height:68px;background:#f0f0f0"></div>
<div class="a" style="left:0;top:68px;width:17px;height:916px;background:#f0f0f0"></div>
<div class="a" style="left:0;top:0;width:1848px;height:12px;background:#3c4448"></div>
<div class="a" style="left:4px;top:0;width:14px;height:6px;background:#fff;border:2px solid #e00;border-top:none"></div>
<div class="a nw" style="left:26px;top:-5px;width:117px;color:#f4f4f4;font-size:13.5px;line-height:16px;font-weight:bold;transform:scaleY(1.2);transform-origin:0 100%">金字塔决策交易系统</div>
<div class="a nw" style="left:160px;top:-5px;width:82px;color:#f4f4f4;font-size:13.5px;line-height:16px;font-weight:bold;transform:scaleY(1.2);transform-origin:0 100%">[100017530]</div>
<div class="a nw" style="left:259px;top:-5px;width:151px;color:#f4f4f4;font-size:13.5px;line-height:16px;font-weight:bold;transform:scaleY(1.2);transform-origin:0 100%">[裘+商tech+macdday]</div>
<div class="a" style="left:1259px;top:-10px;width:45px;height:17px;background:#f4f4f4;border:1px solid #888;border-radius:2px;overflow:hidden"><div class="nw" style="color:#222;font-size:13px;text-align:center;margin-top:-2px">板块池</div></div>
<div class="a" style="left:1309px;top:-10px;width:45px;height:17px;background:#f4f4f4;border:1px solid #888;border-radius:2px;overflow:hidden"><div class="nw" style="color:#222;font-size:13px;text-align:center;margin-top:-2px">锁定</div></div>
<div class="a" style="left:1358px;top:-10px;width:45px;height:17px;background:#f4f4f4;border:1px solid #888;border-radius:2px;overflow:hidden"><div class="nw" style="color:#222;font-size:13px;text-align:center;margin-top:-2px">智能</div></div>
<div class="a" style="left:1408px;top:-10px;width:45px;height:17px;background:#f4f4f4;border:1px solid #888;border-radius:2px;overflow:hidden"><div class="nw" style="color:#222;font-size:13px;text-align:center;margin-top:-2px">策略库</div></div>
<div class="a" style="left:1457px;top:-10px;width:45px;height:17px;background:#f4f4f4;border:1px solid #888;border-radius:2px;overflow:hidden"><div class="nw" style="color:#222;font-size:13px;text-align:center;margin-top:-2px">公式</div></div>
<div class="a" style="left:1507px;top:-10px;width:45px;height:17px;background:#f4f4f4;border:1px solid #888;border-radius:2px;overflow:hidden"><div class="nw" style="color:#c00;font-size:13px;text-align:center;margin-top:-2px">对买</div></div>
<div class="a" style="left:1556px;top:-10px;width:45px;height:17px;background:#f4f4f4;border:1px solid #888;border-radius:2px;overflow:hidden"><div class="nw" style="color:#222;font-size:13px;text-align:center;margin-top:-2px">账户</div></div>
<div class="a" style="left:1606px;top:-10px;width:45px;height:17px;background:#f4f4f4;border:1px solid #888;border-radius:2px;overflow:hidden"><div class="nw" style="color:#c00;font-size:13px;text-align:center;margin-top:-2px">委托</div></div>
<div class="a" style="left:1655px;top:-10px;width:45px;height:17px;background:#f4f4f4;border:1px solid #888;border-radius:2px;overflow:hidden"><div class="nw" style="color:#c00;font-size:13px;text-align:center;margin-top:-2px">行情</div></div>
<div class="a" style="left:1705px;top:-10px;width:45px;height:17px;background:#f4f4f4;border:1px solid #888;border-radius:2px;overflow:hidden"><div class="nw" style="color:#222;font-size:13px;text-align:center;margin-top:-2px">资讯</div></div>
<div class="a" style="left:1754px;top:-10px;width:45px;height:17px;background:#f4f4f4;border:1px solid #888;border-radius:2px;overflow:hidden"><div class="nw" style="color:#222;font-size:13px;text-align:center;margin-top:-2px">行情</div></div>
<div class="a" style="left:2px;top:14px;width:1px;height:22px;background:#c8c8c8"></div>
<div class="a" style="left:9px;top:17px;width:13px;height:16px;background:#fff;border:1px solid #333;border-top:3px solid #1a3f8f"></div>
<div class="a" style="left:4px;top:19px;width:12px;height:11px;background:#e00;border:1px solid #fff"></div>
<div class="a nw" style="left:28px;top:17px;color:#000;font-size:13px">文件(<u>F</u>)</div>
<div class="a nw" style="left:82px;top:17px;color:#000;font-size:13px">板块(<u>M</u>)</div>
<div class="a nw" style="left:143px;top:17px;color:#000;font-size:13px">画面(<u>P</u>)</div>
<div class="a nw" style="left:198px;top:17px;color:#000;font-size:13px">查看(<u>V</u>)</div>
<div class="a nw" style="left:254px;top:17px;color:#000;font-size:13px">交易(<u>O</u>)</div>
<div class="a nw" style="left:312px;top:17px;color:#000;font-size:13px">分析(<u>A</u>)</div>
<div class="a nw" style="left:368px;top:17px;color:#000;font-size:13px">工具(<u>T</u>)</div>
<div class="a nw" style="left:422px;top:17px;color:#000;font-size:13px">窗口(<u>W</u>)</div>
<div class="a nw" style="left:482px;top:17px;color:#000;font-size:13px">帮助(<u>H</u>)</div>
<div class="a" style="left:0;top:39px;width:1848px;height:1px;background:#a0a0a0"></div>
<div class="a" style="left:0;top:40px;width:1848px;height:1px;background:#fff"></div>
<div class="a" style="left:0;top:66px;width:1848px;height:4px;background:#a8a8a8"></div>
<div class="a" style="left:0;top:72px;width:13px;height:76px;background:#f4f4f4;border:1px solid #a0a0a0;border-left:none"></div>
<div class="a nw" style="left:-30px;top:92px;width:64px;height:12px;transform:rotate(90deg);font-size:12px;line-height:12px;color:#000;text-align:center">商品期货</div>
<svg class="a" style="left:0;top:40px" width="1150" height="27" font-family="Liberation Sans"><line x1="1.5" y1="2" x2="1.5" y2="25" stroke="#a0a0a0"/><line x1="5.5" y1="2" x2="5.5" y2="25" stroke="#a0a0a0"/><rect x="12" y="6" width="14" height="14" fill="#000"/><rect x="14" y="7" width="10" height="6" fill="#e8e8e8"/><rect x="13" y="7" width="1" height="12" fill="#807a00"/><rect x="24" y="7" width="1" height="12" fill="#807a00"/><rect x="19" y="16" width="3" height="3" fill="#fff"/><line x1="33.5" y1="2" x2="33.5" y2="25" stroke="#a0a0a0"/><g stroke="#888" fill="none"><circle cx="47" cy="57" r="2" transform="translate(0,-40)"/><circle cx="52" cy="57" r="2" transform="translate(0,-40)"/><path d="M46 6l5 9M51 6l-5 9"/></g><g stroke="#888" fill="#f0f0f0"><rect x="64" y="6" width="8" height="10"/><rect x="70" y="10" width="8" height="10"/><path d="M72 13h4M72 15h4M72 17h4"/></g><g stroke="#888" fill="#ccc"><rect x="86" y="7" width="13" height="13"/><rect x="92" y="13" width="8" height="7" fill="#f0f0f0"/></g><line x1="107.5" y1="2" x2="107.5" y2="25" stroke="#a0a0a0"/><path d="M115 21l13-9" stroke="#777"/><path d="M124 14l4-3 4 5-3 4z" fill="#999"/><path d="M138 21l13-9" stroke="#000"/><path d="M146 14l4-3 4 5-3 4z" fill="#0000e0" stroke="#000" stroke-width=".6"/><path d="M138 10q3-5 8-1" stroke="#0000c0" fill="none" stroke-width="1.5"/><path d="M160 21l13-9" stroke="#000"/><path d="M168 14l4-3 4 5-3 4z" fill="#0000e0" stroke="#000" stroke-width=".6"/><path d="M160 9q4-4 8 1" stroke="#0000c0" fill="none" stroke-width="1.5"/><path d="M182 21l13-9M183 7l10 12" stroke="#999"/><path d="M190 14l4-3 4 5-3 4z" fill="#aaa"/><line x1="203.5" y1="2" x2="203.5" y2="25" stroke="#a0a0a0"/><g fill="#555"><rect x="212" y="8" width="6" height="11"/><rect x="221" y="8" width="6" height="11"/><rect x="217" y="10" width="5" height="4"/></g><line x1="233.5" y1="2" x2="233.5" y2="25" stroke="#a0a0a0"/><path d="M245 16q3-6 10-2" stroke="#aaa" fill="none" stroke-width="1.6"/><path d="M243 12v5h5z" fill="#aaa"/><path d="M267 14q7-4 10 2" stroke="#aaa" fill="none" stroke-width="1.6"/><path d="M279 12v5h-5z" fill="#aaa"/><line x1="285.5" y1="2" x2="285.5" y2="25" stroke="#a0a0a0"/><g stroke="#555"><path d="M300 6h10M300 10h10M300 14h10M300 18h10"/><path d="M297 4v18" stroke-dasharray="1 1"/></g><g stroke="#555"><path d="M322 6h10M322 10h10M322 14h10M322 18h10"/><path d="M319 4v18" stroke-dasharray="1 1"/></g><path d="M293 12h5M296 10l2 2-2 2" stroke="#555" fill="none"/><line x1="337.5" y1="2" x2="337.5" y2="25" stroke="#a0a0a0"/><g stroke="#bbb"><path d="M347 7h13M347 11h13M347 15h13M347 19h13"/></g><g stroke="#bbb"><path d="M369 10h13M369 14h13M369 18h13M371 6h8"/></g><path d="M390 18h5l-2.5 3z" fill="#000"/><line x1="398.5" y1="2" x2="398.5" y2="25" stroke="#a0a0a0"/><line x1="402.5" y1="2" x2="402.5" y2="25" stroke="#a0a0a0"/><line x1="406.5" y1="2" x2="406.5" y2="25" stroke="#a0a0a0"/><rect x="413.5" y="2.5" width="21" height="22" fill="#e5f1fb" stroke="#0078d7"/><path d="M421 6l0 13 3-3 3 5 2-1-3-5 4 0z" fill="#000"/><line x1="439.5" y1="2" x2="439.5" y2="25" stroke="#a0a0a0"/><path d="M448 19l12-11" stroke="#000" stroke-width="1.6"/><path d="M470 13h5l-2.5 3z" fill="#000"/><text x="482" y="20" font-size="15" font-family="Liberation Sans" font-weight="bold">%</text><path d="M503 13h5l-2.5 3z" fill="#000"/><rect x="514" y="8" width="13" height="11" fill="none" stroke="#000"/><path d="M517 8v11M520 8v11M523 8v11" stroke="#000"/><path d="M536 13h5l-2.5 3z" fill="#000"/><path d="M548 19h13M549 19l9-9" stroke="#000" stroke-width="1.5"/><path d="M549 19h12" stroke="#000" stroke-width="2"/><path d="M569 13h5l-2.5 3z" fill="#000"/><path d="M581 8v11M583 9h6M583 13h6M583 17h6" stroke="#000"/><path d="M602 13h5l-2.5 3z" fill="#000"/><path d="M616 8v11M620 8v11M614 11h9M614 16h9" stroke="#000" stroke-width="1.3"/><path d="M635 13h5l-2.5 3z" fill="#000"/><rect x="647.5" y="8.5" width="12" height="12" fill="none" stroke="#000" stroke-width="1.2"/><path d="M668 13h5l-2.5 3z" fill="#000"/><circle cx="686" cy="14" r="6" fill="none" stroke="#000" stroke-width="1.3"/><path d="M701 13h5l-2.5 3z" fill="#000"/><text x="712" y="21" font-size="15" font-family="Liberation Sans">A</text><line x1="732.5" y1="2" x2="732.5" y2="25" stroke="#a0a0a0"/><path d="M744 7v8q0 5 4.5 5t4.5-5v-8" stroke="#000" stroke-width="2.5" fill="none"/><rect x="764.5" y="11.5" width="8" height="8" fill="none" stroke="#000"/><rect x="767.5" y="8.5" width="8" height="8" fill="#f0f0f0" stroke="#000"/><path d="M788 10l9 9M797 10l-9 9" stroke="#888" stroke-width="1.6"/><path d="M809 11h11M811 11v10h7v-10M813 9h5" stroke="#aaa" fill="none"/><rect x="830.5" y="14.5" width="11" height="7" fill="none" stroke="#000" stroke-width="1.4"/><path d="M833 14v-3q3-4 6 0v3" stroke="#000" fill="none" stroke-width="1.4"/><text x="853" y="19" font-size="13" font-family="Liberation Serif" font-weight="bold">A</text><rect x="853" y="20" width="11" height="2" fill="#e00"/><path d="M874 13h5l-2.5 3z" fill="#000"/><rect x="886.5" y="8.5" width="11" height="12" fill="none" stroke="#000" stroke-width="1.4" rx="1"/><path d="M889 9v3h6v-3" stroke="#000" fill="none"/><path d="M907 13h5l-2.5 3z" fill="#000"/><line x1="916.5" y1="2" x2="916.5" y2="25" stroke="#a0a0a0"/><text x="924" y="20" font-size="13">买</text><text x="946" y="20" font-size="13">卖</text><text x="969" y="20" font-size="13">平</text><text x="991" y="20" font-size="13">反</text><path d="M1013 18h5l-2.5 3z" fill="#000"/><line x1="1023.5" y1="1" x2="1023.5" y2="26" stroke="#d0d0d0"/><line x1="1036.5" y1="2" x2="1036.5" y2="25" stroke="#a0a0a0"/><line x1="1040.5" y1="2" x2="1040.5" y2="25" stroke="#a0a0a0"/><path d="M1047 20h15M1048 18l4-6 4 4 5-6" stroke="#000" fill="none" stroke-width="1.3"/><text x="1069" y="20" font-size="13">30</text><rect x="1087.5" y="2.5" width="21" height="22" fill="#e5f1fb" stroke="#0078d7"/><text x="1091" y="20" font-size="14">日</text><text x="1116" y="20" font-size="13">周</text><path d="M1135 18h5l-2.5 3z" fill="#000"/><line x1="1145.5" y1="1" x2="1145.5" y2="26" stroke="#d0d0d0"/></svg>
</body></html>
